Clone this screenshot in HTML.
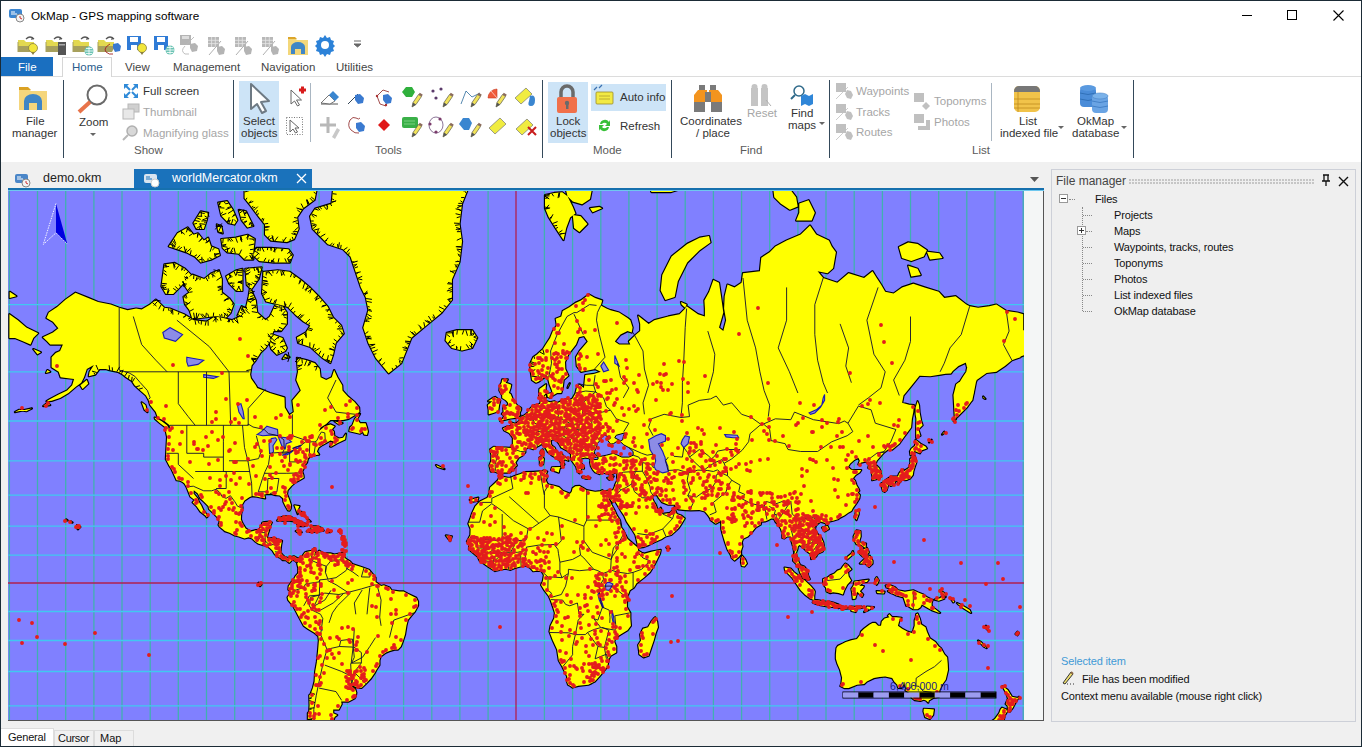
<!DOCTYPE html>
<html><head><meta charset="utf-8">
<style>
*{margin:0;padding:0;box-sizing:border-box}
html,body{width:1362px;height:747px;overflow:hidden;background:#f0f0f0;font-family:"Liberation Sans",sans-serif;font-size:11.5px;color:#222}
.a{position:absolute;white-space:nowrap}
#win{position:absolute;left:0;top:0;width:1362px;height:747px;background:#f0f0f0;overflow:hidden}
.t{position:absolute;white-space:nowrap;line-height:13px}
.g{color:#a6a6a6}
.lbl{color:#5a5a5a}
.sep{position:absolute;width:1px;background:#34495a}
.sepl{position:absolute;width:1px;background:#a9b6c2}
</style></head><body>
<div id="win">
<div class="a" style="left:0;top:0;width:1362px;height:162px;background:#fff"></div>
<div class="t" style="left:31px;top:9px;font-size:11.7px;color:#000">OkMap - GPS mapping software</div>
<div class="a" style="left:1242px;top:15px;width:10px;height:1px;background:#000"></div>
<div class="a" style="left:1287px;top:10px;width:10px;height:10px;border:1px solid #000"></div>
<svg class="a" style="left:1333px;top:10px" width="11" height="11"><path d="M0.5 0.5L10.5 10.5M10.5 0.5L0.5 10.5" stroke="#000" stroke-width="1.1"/></svg>
<svg class="a" style="left:0;top:0" width="370" height="57">
<g transform="translate(18,36)"><path d="M0 4h6l2 2h8v4H0z" fill="#e2d850"/><path d="M0 10h17l-3 6H0z" fill="#a7a05c"/><path d="M0 6v10" stroke="#a7a05c" stroke-width="1"/><path d="M8 3q4-4 8 0" stroke="#555" stroke-width="1.2" fill="none"/><path d="M14 1l2 2-3 1z" fill="#555"/></g><g transform="translate(28,43)"><circle cx="5" cy="5" r="4.5" fill="#f2e63a" stroke="#8a8040" stroke-width="0.8"/><path d="M3 9l2 3 2-3z" fill="#8a8040"/></g>
<g transform="translate(46,36)"><path d="M0 4h6l2 2h8v4H0z" fill="#e2d850"/><path d="M0 10h17l-3 6H0z" fill="#a7a05c"/><path d="M0 6v10" stroke="#a7a05c" stroke-width="1"/><path d="M8 3q4-4 8 0" stroke="#555" stroke-width="1.2" fill="none"/><path d="M14 1l2 2-3 1z" fill="#555"/></g><rect x="58" y="42" width="8" height="13" fill="#555"/><rect x="59" y="44" width="6" height="1.5" fill="#aaa"/>
<g transform="translate(73,36)"><path d="M0 4h6l2 2h8v4H0z" fill="#e2d850"/><path d="M0 10h17l-3 6H0z" fill="#a7a05c"/><path d="M0 6v10" stroke="#a7a05c" stroke-width="1"/><path d="M8 3q4-4 8 0" stroke="#555" stroke-width="1.2" fill="none"/><path d="M14 1l2 2-3 1z" fill="#555"/></g><g transform="translate(84,46)"><circle cx="5" cy="5" r="4.5" fill="#6cc4b4"/><path d="M0.5 5h9M5 0.5v9M2 2.5h6M2 7.5h6" stroke="#fff" stroke-width="0.8"/></g>
<g transform="translate(98,36)"><path d="M0 4h6l2 2h8v4H0z" fill="#e2d850"/><path d="M0 10h17l-3 6H0z" fill="#a7a05c"/><path d="M0 6v10" stroke="#a7a05c" stroke-width="1"/><path d="M8 3q4-4 8 0" stroke="#555" stroke-width="1.2" fill="none"/><path d="M14 1l2 2-3 1z" fill="#555"/></g><path d="M110 44q-7 4-4 8q3 3 7 2" stroke="#a02020" stroke-width="0.9" fill="none"/><path d="M113 44l5-1 3 3-1 5-5 1-2-4z" fill="#3a7ad0"/>
<rect x="127" y="36" width="14" height="14" fill="#2f7bd6"/><rect x="130" y="37" width="8" height="5" fill="#fff"/><rect x="131" y="45" width="6" height="5" fill="#fff"/><g transform="translate(137,43)"><circle cx="5" cy="5" r="4.5" fill="#f2e63a" stroke="#8a8040" stroke-width="0.8"/><path d="M3 9l2 3 2-3z" fill="#8a8040"/></g>
<rect x="154" y="36" width="14" height="14" fill="#2f7bd6"/><rect x="157" y="37" width="8" height="5" fill="#fff"/><rect x="158" y="45" width="6" height="5" fill="#fff"/><g transform="translate(165,45)"><circle cx="5" cy="5" r="4.5" fill="#6cc4b4"/><path d="M0.5 5h9M5 0.5v9M2 2.5h6M2 7.5h6" stroke="#fff" stroke-width="0.8"/></g>
<g transform="translate(180,35)"><rect x="0" y="0" width="11" height="10" fill="#b4b4b4"/><rect x="2" y="1" width="7" height="3" fill="#ddd"/></g><path d="M185 46q-5 5 0 8h4M186 45l8-8" stroke="#b8b8b8" stroke-width="0.9" fill="none"/><path d="M190 44l5-1 3 3-1 5-5 1-2-4z" fill="#b4b4b4"/>
<g transform="translate(208,37)"><rect x="0" y="0" width="11" height="10" fill="#b8b8b8"/><path d="M0 3.3h11M0 6.6h11M3.6 0v10M7.3 0v10" stroke="#e6e6e6" stroke-width="0.8"/><path d="M1 18L13 4" stroke="#b0b0b0" stroke-width="1"/><path d="M9 10l5-1 3 3-1 5-5 1-2-4z" fill="#b4b4b4"/></g>
<g transform="translate(235,37)"><rect x="0" y="0" width="11" height="10" fill="#b8b8b8"/><path d="M0 3.3h11M0 6.6h11M3.6 0v10M7.3 0v10" stroke="#e6e6e6" stroke-width="0.8"/><path d="M1 18L13 4" stroke="#b0b0b0" stroke-width="1"/><path d="M9 10l5-1 3 3-1 5-5 1-2-4z" fill="#b4b4b4"/></g>
<g transform="translate(262,37)"><rect x="0" y="0" width="11" height="10" fill="#b8b8b8"/><path d="M0 3.3h11M0 6.6h11M3.6 0v10M7.3 0v10" stroke="#e6e6e6" stroke-width="0.8"/><path d="M1 18L13 4" stroke="#b0b0b0" stroke-width="1"/><path d="M9 10l5-1 3 3-1 5-5 1-2-4z" fill="#b4b4b4"/></g>
<path d="M288 38h7l2 2h11v15h-20z" fill="#f3d77a"/><path d="M288 37h7l2 2h-9z" fill="#dca52a"/><path d="M291 54v-7a7 5 0 0 1 14 0v7h-4v-5h-6v5z" fill="#3f86c6"/>
<path d="M325 35l2 3 3-1 1 3 3 1-1 3 2 2-2 2 1 3-3 1-1 3-3-1-2 3-2-3-3 1-1-3-3-1 1-3-2-2 2-2-1-3 3-1 1-3 3 1z" fill="#2c82d8"/><circle cx="325" cy="45" r="4" fill="#fff"/>
<path d="M354 41h7M354 44h7l-3.5 3z" stroke="#666" stroke-width="1" fill="#666"/>
</svg>
<svg class="a" style="left:8px;top:7px" width="18" height="16" viewBox="0 0 18 16"><rect x="1" y="2" width="13" height="9" rx="2" fill="#3c86d0"/><path d="M3 5h4M3 7h6" stroke="#fff" stroke-width="1"/><circle cx="12" cy="11" r="4" fill="#f4f4f4" stroke="#888" stroke-width="1"/><path d="M12 9v2l2 1" stroke="#c33" stroke-width="1" fill="none"/></svg>

<div class="a" style="left:0;top:76px;width:1362px;height:1px;background:#dcdcdc"></div>
<div class="a" style="left:0;top:57px;width:53px;height:19px;background:#1a6fc0"></div>
<div class="t" style="left:18px;top:61px;color:#fff;font-size:11.5px">File</div>
<div class="a" style="left:62px;top:57px;width:50px;height:20px;background:#fff;border:1px solid #d6d6d6;border-bottom:none"></div>
<div class="t" style="left:72px;top:61px;color:#2a5c8c;font-size:11.5px">Home</div>
<div class="t" style="left:125px;top:61px;color:#444;font-size:11.5px">View</div>
<div class="t" style="left:173px;top:61px;color:#444;font-size:11.5px">Management</div>
<div class="t" style="left:261px;top:61px;color:#444;font-size:11.5px">Navigation</div>
<div class="t" style="left:336px;top:61px;color:#444;font-size:11.5px">Utilities</div>
<!-- separators -->
<div class="sep" style="left:63px;top:80px;height:78px"></div>
<div class="sep" style="left:233px;top:80px;height:78px"></div>
<div class="sep" style="left:542px;top:80px;height:78px"></div>
<div class="sep" style="left:671px;top:80px;height:78px"></div>
<div class="sep" style="left:829px;top:80px;height:78px"></div>
<div class="sep" style="left:1133px;top:80px;height:78px"></div>
<div class="sepl" style="left:310px;top:83px;height:59px"></div>
<div class="sepl" style="left:991px;top:83px;height:58px"></div>
<!-- highlight boxes -->
<div class="a" style="left:239px;top:81px;width:40px;height:62px;background:#cde4f7"></div>
<div class="a" style="left:548px;top:82px;width:40px;height:61px;background:#cde4f7"></div>
<div class="a" style="left:591px;top:84px;width:75px;height:27px;background:#cde4f7"></div>
<svg class="a" style="left:0;top:76px" width="1140" height="86">
<!-- File manager folder -->
<g transform="translate(0,-76)">
<path d="M19 88h9l3 3h16v19H19z" fill="#f5d67c"/><path d="M19 87h9l3 3H19z" fill="#dba224"/><path d="M24 110v-9a9 7 0 0 1 18 0v9h-5v-7h-8v7z" fill="#3f86c6"/>
<!-- Zoom magnifier -->
<circle cx="97" cy="95" r="9.5" fill="none" stroke="#6a6a6a" stroke-width="2"/><path d="M90 102L79 112" stroke="#e8734a" stroke-width="4"/>
<path d="M90 133h6l-3 3z" fill="#666"/>
<!-- Full screen -->
<path d="M124 84h5l-5 5zM138 84h-5l5 5zM124 98h5l-5-5zM138 98h-5l5-5z" fill="#2f8ad8"/><path d="M126 86l4 4M136 86l-4 4M126 96l4-4M136 96l-4-4" stroke="#2f8ad8" stroke-width="2"/>
<!-- Thumbnail gray -->
<rect x="128" y="104" width="11" height="8" fill="#d0d0d0" stroke="#b8b8b8"/><rect x="123" y="109" width="11" height="10" fill="#e8e8e8" stroke="#b8b8b8"/>
<!-- Magnifying glass gray -->
<circle cx="132" cy="131" r="5" fill="#d8d8d8" stroke="#b0b0b0" stroke-width="1.5"/><path d="M128 135l-5 5" stroke="#b8b8b8" stroke-width="2"/>
<!-- Select arrow -->
<path d="M251 84v25l6-5 5 9 4-2-5-9 8-1z" fill="#fff" stroke="#6e7a84" stroke-width="2" stroke-linejoin="round"/>
<path d="M291 90v14l3.5-3 3 5 2-1-3-5h5z" fill="#fff" stroke="#666" stroke-width="1"/><path d="M299 90h7M302.5 86.5v7" stroke="#d81c1c" stroke-width="3"/>
<rect x="286.5" y="117.5" width="16" height="17" fill="none" stroke="#777" stroke-dasharray="1 1.5"/><path d="M290 120v12l3-3 2.5 4 2-1-2.5-4h4z" fill="#fff" stroke="#666" stroke-width="1"/>
<!-- tools row1 -->
<path d="M321 104h17" stroke="#555" stroke-width="1"/><path d="M321 103l8-8 6 6-5 3z" fill="#fff" stroke="#555" stroke-width="0.8"/><path d="M329 95l4-4 6 6-4 4z" fill="#3a86d0"/>
<path d="M348 104l10-10" stroke="#345" stroke-width="1"/><path d="M355 95l5-1 4 4-1 5-5 1-3-4z" fill="#3a7ad0"/>
<path d="M377 96l6-6 6 2M377 96l3 8 6 2" stroke="#8a2020" stroke-width="0.8" fill="none"/><path d="M383 95l5-1 4 4-1 5-5 1-3-4z" fill="#3a7ad0"/><circle cx="377" cy="96" r="1.2" fill="#a33"/><circle cx="386" cy="105" r="1.2" fill="#a33"/>
<path d="M402 92l4-5h6l3 5-3 5h-6z" fill="#2fb03c"/><g transform="translate(412,94)"><path d="M0 13L1 8.5 6.5 0.5 9.5 2.5 4 10.5z" fill="#f2e35a" stroke="#5a5a4a" stroke-width="0.7"/><path d="M6.5 0.5L7.8-1.2 10.8 0.8 9.5 2.5z" fill="#8a6a5a"/><path d="M0 13l1-4.5 3 2z" fill="#555"/></g>
<circle cx="433" cy="91" r="1.6" fill="#5a3a6a"/><circle cx="441" cy="89" r="1.6" fill="#5a3a6a"/><circle cx="436" cy="98" r="1.6" fill="#5a3a6a"/><g transform="translate(443,94)"><path d="M0 13L1 8.5 6.5 0.5 9.5 2.5 4 10.5z" fill="#f2e35a" stroke="#5a5a4a" stroke-width="0.7"/><path d="M6.5 0.5L7.8-1.2 10.8 0.8 9.5 2.5z" fill="#8a6a5a"/><path d="M0 13l1-4.5 3 2z" fill="#555"/></g>
<path d="M461 104l5-13 6 6 8-4" stroke="#2a6a9a" stroke-width="0.8" fill="none"/><g transform="translate(471,94)"><path d="M0 13L1 8.5 6.5 0.5 9.5 2.5 4 10.5z" fill="#f2e35a" stroke="#5a5a4a" stroke-width="0.7"/><path d="M6.5 0.5L7.8-1.2 10.8 0.8 9.5 2.5z" fill="#8a6a5a"/><path d="M0 13l1-4.5 3 2z" fill="#555"/></g>
<path d="M497 98H488A9 9 0 0 1 497 89z" fill="#f05a3a" stroke="#c83a20" stroke-width="0.6"/><path d="M497 98L491 91" stroke="#fff" stroke-width="0.6"/><g transform="translate(496,94)"><path d="M0 13L1 8.5 6.5 0.5 9.5 2.5 4 10.5z" fill="#f2e35a" stroke="#5a5a4a" stroke-width="0.7"/><path d="M6.5 0.5L7.8-1.2 10.8 0.8 9.5 2.5z" fill="#8a6a5a"/><path d="M0 13l1-4.5 3 2z" fill="#555"/></g>
<path d="M515 98l11-10 6 6-11 10z" fill="#f0ec40" stroke="#777" stroke-width="0.7"/><path d="M530 96q5-2 5 4t-4 6q-4 0-2-5z" fill="#3a86d0"/>
<!-- tools row2 -->
<path d="M320 125h16M328 117v16" stroke="#b8b8b8" stroke-width="3"/><path d="M332 137l5-9 3 2-5 9z" fill="#c8c8c8"/>
<path d="M350 120q3-4 6-2t4 0M350 120q-3 6 1 10t8 3" stroke="#8a2020" stroke-width="0.8" fill="none"/><path d="M356 123l5-1 4 4-1 5-5 1-3-4z" fill="#3a7ad0"/>
<path d="M384 119l6 6-6 6-6-6z" fill="#e01818"/>
<rect x="402" y="117" width="16" height="11" rx="2" fill="#3ab048"/><path d="M404 121h11M404 124h11" stroke="#8ad890" stroke-width="0.8"/><g transform="translate(412,124)"><path d="M0 13L1 8.5 6.5 0.5 9.5 2.5 4 10.5z" fill="#f2e35a" stroke="#5a5a4a" stroke-width="0.7"/><path d="M6.5 0.5L7.8-1.2 10.8 0.8 9.5 2.5z" fill="#8a6a5a"/><path d="M0 13l1-4.5 3 2z" fill="#555"/></g>
<ellipse cx="436" cy="125" rx="7" ry="8" fill="none" stroke="#5a3a6a" stroke-width="0.7"/><circle cx="430" cy="124" r="1.6" fill="#7a3a6a"/><circle cx="440" cy="119" r="1.6" fill="#7a3a6a"/><circle cx="436" cy="132" r="1.6" fill="#7a3a6a"/><g transform="translate(443,124)"><path d="M0 13L1 8.5 6.5 0.5 9.5 2.5 4 10.5z" fill="#f2e35a" stroke="#5a5a4a" stroke-width="0.7"/><path d="M6.5 0.5L7.8-1.2 10.8 0.8 9.5 2.5z" fill="#8a6a5a"/><path d="M0 13l1-4.5 3 2z" fill="#555"/></g>
<path d="M459 124l4-6h6l3 5-3 7h-5z" fill="#3a86d0"/><g transform="translate(471,124)"><path d="M0 13L1 8.5 6.5 0.5 9.5 2.5 4 10.5z" fill="#f2e35a" stroke="#5a5a4a" stroke-width="0.7"/><path d="M6.5 0.5L7.8-1.2 10.8 0.8 9.5 2.5z" fill="#8a6a5a"/><path d="M0 13l1-4.5 3 2z" fill="#555"/></g>
<path d="M489 128l11-10 6 6-11 10z" fill="#f0ec40" stroke="#777" stroke-width="0.7"/>
<path d="M516 129l11-10 6 6-11 10z" fill="#f0ec40" stroke="#777" stroke-width="0.7"/><path d="M528 127l8 8M536 127l-8 8" stroke="#c81c1c" stroke-width="2"/>
<!-- Lock -->
<path d="M561 98v-6a6 6 0 0 1 12 0v6" fill="none" stroke="#6a6a6a" stroke-width="3.5"/><rect x="557" y="97" width="20" height="16" rx="2" fill="#f0704a"/><circle cx="567" cy="103" r="2.2" fill="#6a6a6a"/><rect x="566" y="103" width="2.5" height="6" fill="#6a6a6a"/>
<!-- Auto info -->
<rect x="596" y="92" width="17" height="12" rx="1" fill="#f2ea44" stroke="#9a8a2a" stroke-width="0.8"/><path d="M599 96h11M599 99h11" stroke="#b0a030" stroke-width="0.8"/><path d="M594 90l3-3M599 88l3-3" stroke="#3a70b0" stroke-width="1.2"/>
<!-- Refresh -->
<path d="M600 124a5 5 0 0 1 9-2l1-2v6h-5l2-2a3 3 0 0 0-5 0z" fill="#38c038"/><path d="M609 127a5 5 0 0 1-9 2l-1 2v-6h5l-2 2a3 3 0 0 0 5 0z" fill="#38c038"/>
<!-- Binoculars -->
<rect x="699" y="85" width="6" height="5" fill="#7a7a7a"/><rect x="710" y="85" width="6" height="5" fill="#7a7a7a"/><path d="M694 95l4-5h9v12h-13z" fill="#f3941e"/><path d="M722 95l-4-5h-9v12h13z" fill="#f3941e"/><rect x="705" y="92" width="6" height="10" fill="#7a7a7a"/><rect x="694" y="102" width="11" height="10" fill="#7a7a7a"/><rect x="711" y="102" width="11" height="10" fill="#7a7a7a"/>
<!-- Reset gray -->
<path d="M751 88h7v18h-7zM761 88h7v18h-7z" fill="#c4c4c4"/><circle cx="754.5" cy="87" r="3" fill="#c4c4c4"/><circle cx="764.5" cy="87" r="3" fill="#c4c4c4"/><path d="M766 100l5 6" stroke="#b0b0b0" stroke-width="1"/>
<!-- Find maps -->
<circle cx="799" cy="91" r="5" fill="#fff" stroke="#2f6a8a" stroke-width="1.5"/><path d="M795 95l-4 4" stroke="#2f6a8a" stroke-width="2"/><path d="M801 96l4-2 4 2 4-2v10l-4 2-4-2-4 2z" fill="#2f86d8"/>
<path d="M819 122h6l-3 3z" fill="#666"/>
<!-- List small gray icons -->
<g fill="#c0c0c0">
<rect x="836" y="83" width="10" height="9"/><path d="M847 90l4 1 2 4-2 4-4-1-2-4z"/><path d="M836 99l12-12" stroke="#c0c0c0" stroke-width="0.8"/>
<rect x="836" y="104" width="10" height="9"/><path d="M847 111l4 1 2 4-2 4-4-1-2-4z"/><path d="M836 120l12-12" stroke="#c0c0c0" stroke-width="0.8"/>
<rect x="836" y="124" width="10" height="9"/><path d="M847 131l4 1 2 4-2 4-4-1-2-4z"/><path d="M836 140l12-12" stroke="#c0c0c0" stroke-width="0.8"/>
<rect x="914" y="93" width="10" height="9"/><path d="M926 102l4 4-4 4-4-4z"/>
<rect x="914" y="114" width="10" height="9"/><path d="M918 130h12v-10h-4v6h-8z"/>
</g>
<!-- List indexed file -->
<rect x="1014" y="86" width="26" height="26" rx="5" fill="#f1c34a"/><path d="M1019 86h16a5 5 0 0 1 5 5v1h-26v-1a5 5 0 0 1 5-5z" fill="#777"/><path d="M1014 99h26M1014 104h26M1014 108h26M1018 92v20" stroke="#c08a20" stroke-width="0.8"/>
<path d="M1058 126h6l-3 3z" fill="#666"/>
<!-- OkMap database -->
<rect x="1080" y="87" width="16" height="20" rx="4" fill="#4a8cd8"/><ellipse cx="1088" cy="88" rx="8" ry="3" fill="#5a9ae0"/><path d="M1080 93q8 3 16 0M1080 99q8 3 16 0" stroke="#2a6ab0" stroke-width="0.8" fill="none"/>
<rect x="1092" y="95" width="16" height="18" rx="4" fill="#6aa4e4"/><ellipse cx="1100" cy="96" rx="8" ry="3" fill="#7ab2ea" stroke="#4a84c8" stroke-width="0.6"/><path d="M1092 101q8 3 16 0M1092 106q8 3 16 0" stroke="#3a78c0" stroke-width="0.8" fill="none"/>
<path d="M1121 126h6l-3 3z" fill="#666"/>
</g>
</svg>
<!-- labels -->
<div class="t" style="left:26px;top:115px;color:#333">File</div>
<div class="t" style="left:12px;top:127px;color:#333">manager</div>
<div class="t" style="left:79px;top:116px;color:#333">Zoom</div>
<div class="t" style="left:143px;top:85px;color:#333">Full screen</div>
<div class="t g" style="left:143px;top:106px">Thumbnail</div>
<div class="t g" style="left:143px;top:127px">Magnifying glass</div>
<div class="t lbl" style="left:134px;top:144px">Show</div>
<div class="t" style="left:243px;top:115px;color:#333">Select</div>
<div class="t" style="left:241px;top:127px;color:#333">objects</div>
<div class="t lbl" style="left:375px;top:144px">Tools</div>
<div class="t" style="left:556px;top:115px;color:#333">Lock</div>
<div class="t" style="left:550px;top:127px;color:#333">objects</div>
<div class="t" style="left:620px;top:91px;color:#333">Auto info</div>
<div class="t" style="left:620px;top:120px;color:#333">Refresh</div>
<div class="t lbl" style="left:593px;top:144px">Mode</div>
<div class="t" style="left:680px;top:115px;color:#333">Coordinates</div>
<div class="t" style="left:696px;top:127px;color:#333">/ place</div>
<div class="t g" style="left:747px;top:107px">Reset</div>
<div class="t" style="left:791px;top:107px;color:#333">Find</div>
<div class="t" style="left:788px;top:119px;color:#333">maps</div>
<div class="t lbl" style="left:740px;top:144px">Find</div>
<div class="t g" style="left:856px;top:85px">Waypoints</div>
<div class="t g" style="left:856px;top:106px">Tracks</div>
<div class="t g" style="left:856px;top:126px">Routes</div>
<div class="t g" style="left:934px;top:95px">Toponyms</div>
<div class="t g" style="left:934px;top:116px">Photos</div>
<div class="t lbl" style="left:972px;top:144px">List</div>
<div class="t" style="left:1019px;top:115px;color:#333">List</div>
<div class="t" style="left:1000px;top:127px;color:#333">indexed file</div>
<div class="t" style="left:1077px;top:115px;color:#333">OkMap</div>
<div class="t" style="left:1072px;top:127px;color:#333">database</div>

<!-- doc tabs -->
<svg class="a" style="left:14px;top:172px" width="18" height="16" viewBox="0 0 18 16"><rect x="1" y="2" width="13" height="9" rx="2" fill="#4a86c8"/><path d="M3 5h4M3 7h6" stroke="#fff" stroke-width="1"/><circle cx="12" cy="11" r="4" fill="#f4f4f4" stroke="#888" stroke-width="1"/><path d="M12 9v2l2 1" stroke="#c33" stroke-width="1" fill="none"/></svg>
<div class="t" style="left:43px;top:172px;font-size:12.5px;color:#222">demo.okm</div>
<div class="a" style="left:134px;top:169px;width:178px;height:20px;background:#1a72bb"></div>
<svg class="a" style="left:143px;top:172px" width="18" height="16" viewBox="0 0 18 16"><rect x="1" y="2" width="13" height="9" rx="2" fill="#d8e4f0"/><path d="M3 5h4M3 7h6" stroke="#1a72bb" stroke-width="1"/><circle cx="12" cy="11" r="4" fill="#fff" stroke="#ccc" stroke-width="1"/></svg>
<div class="t" style="left:172px;top:172px;font-size:12.5px;color:#fff">worldMercator.okm</div>
<svg class="a" style="left:296px;top:173px" width="11" height="11"><path d="M1 1L10 10M10 1L1 10" stroke="#fff" stroke-width="1.3"/></svg>
<svg class="a" style="left:1030px;top:177px" width="10" height="6"><path d="M0 0h9L4.5 5z" fill="#555"/></svg>
<div class="a" style="left:8px;top:188px;width:1036px;height:2px;background:#1670ae"></div>
<div class="a" style="left:8px;top:190px;width:1036px;height:1px;background:#6fc8ef"></div>
<div class="a" style="left:8px;top:191px;width:1036px;height:530px;background:#f4f6f6;border-right:1px solid #555;border-bottom:1px solid #555"></div>
<!-- bottom tabs -->
<div class="a" style="left:1px;top:728px;width:53px;height:18px;background:#fff;border-top:1px solid #ddd;border-right:1px solid #ddd"></div>
<div class="t" style="left:8px;top:731px;color:#111;font-size:11px;letter-spacing:-0.2px">General</div>
<div class="a" style="left:54px;top:730px;width:40px;height:16px;border:1px solid #dcdcdc;border-bottom:none"></div>
<div class="t" style="left:58px;top:732px;color:#111;font-size:11px;letter-spacing:-0.3px">Cursor</div>
<div class="a" style="left:94px;top:730px;width:40px;height:16px;border:1px solid #dcdcdc;border-bottom:none"></div>
<div class="t" style="left:100px;top:732px;color:#111;font-size:11px">Map</div>

<svg class="a" style="left:8px;top:191px" width="1016" height="529" viewBox="8 191 1016 529">
<rect x="8" y="191" width="1016" height="529" fill="#8080ff"/>
<path d="M9.4 191V720M37.5 191V720M65.7 191V720M93.9 191V720M122.0 191V720M150.2 191V720M178.3 191V720M206.5 191V720M234.7 191V720M262.8 191V720M291.0 191V720M319.1 191V720M347.3 191V720M375.5 191V720M403.6 191V720M431.8 191V720M459.9 191V720M488.1 191V720M544.4 191V720M572.6 191V720M600.8 191V720M628.9 191V720M657.1 191V720M685.2 191V720M713.4 191V720M741.6 191V720M769.7 191V720M797.9 191V720M826.0 191V720M854.2 191V720M882.4 191V720M910.5 191V720M938.7 191V720M966.8 191V720M995.0 191V720M1023.2 191V720" stroke="#40b0b0" stroke-width="1.3" fill="none"/>
<path d="M8 705.8H1024M8 671.5H1024M8 640.5H1024M8 611.5H1024M8 555.1H1024M8 526.1H1024M8 495.1H1024M8 460.8H1024M8 421.0H1024M8 371.8H1024M8 304.6H1024" stroke="#40c8f0" stroke-width="1.3" fill="none"/>
<path d="M516 191V720M8 583H1024" stroke="#b02050" stroke-width="1.3" fill="none"/>
<path d="M42.9 337.3 53.0 332.5 58.4 328.3 53.0 321.7 46.5 318.0 48.8 312.6 57.2 307.0 65.7 299.6 75.5 292.7 88.2 297.9 98.1 302.1 110.7 304.6 119.2 307.8 127.6 310.2 136.1 308.6 141.7 309.4 150.2 304.6 155.8 299.6 164.3 307.8 169.9 308.6 184.0 314.2 193.8 320.2 206.5 321.7 214.9 316.5 223.4 318.0 231.8 320.2 240.3 316.5 245.9 308.6 248.7 296.2 250.1 287.4 255.8 300.4 257.2 312.6 265.6 320.2 269.9 316.5 275.5 304.6 282.5 306.2 286.8 312.6 286.8 323.9 281.1 331.1 273.5 331.1 269.9 341.4 265.6 347.9 260.8 352.3 255.8 360.2 251.6 365.5 250.1 374.6 251.0 378.4 255.8 385.3 257.2 387.9 269.9 393.0 284.5 397.4 284.8 407.5 289.3 415.2 293.8 412.1 292.4 400.4 300.8 390.5 296.3 380.0 298.0 371.8 297.2 363.2 296.9 357.8 306.5 360.2 314.9 363.2 319.7 369.0 320.6 377.3 326.2 380.0 331.8 377.3 334.1 370.1 337.4 377.3 342.2 385.3 342.5 390.5 347.9 396.5 354.3 401.8 359.1 407.5 359.4 412.1 356.3 414.3 348.7 418.8 343.1 420.1 330.4 420.1 326.2 424.0 320.6 427.4 318.6 431.6 315.8 434.5 319.7 430.4 324.8 426.2 330.4 424.4 334.6 426.2 331.8 429.5 333.8 431.6 334.3 436.1 338.9 438.6 343.1 437.8 345.9 433.7 345.1 439.4 337.2 443.3 331.5 446.5 330.1 446.5 334.6 441.8 330.4 440.6 327.0 442.5 322.5 444.9 318.6 447.6 316.9 451.5 319.1 454.5 314.9 455.2 309.3 457.1 307.9 458.6 307.0 462.6 305.1 464.8 304.8 466.2 302.2 471.5 303.4 475.0 303.7 477.8 299.4 480.2 295.2 482.5 291.3 485.9 287.6 490.2 287.0 494.1 289.3 499.9 291.0 505.3 290.7 508.4 289.6 510.6 287.9 510.3 285.6 506.2 283.4 501.8 283.1 498.3 279.7 495.4 275.5 495.1 271.3 493.8 267.0 494.1 264.2 494.4 265.1 498.3 261.4 497.7 257.2 496.7 252.1 496.1 249.3 497.3 244.5 500.5 242.0 504.7 242.5 508.1 241.1 514.0 240.9 519.5 242.3 523.1 245.6 528.4 248.7 530.5 250.4 531.7 255.8 530.2 258.6 529.9 261.4 526.7 262.3 522.8 264.2 522.2 269.9 521.6 271.8 522.5 269.9 526.1 269.0 530.5 267.9 533.5 266.8 537.9 269.9 538.4 274.1 538.1 282.0 540.8 281.1 545.1 280.6 549.4 280.8 552.8 282.5 555.1 284.8 557.1 288.2 558.0 291.3 557.1 293.8 556.3 296.9 558.0 298.3 558.8 298.6 560.8 296.6 562.2 295.2 560.8 292.4 559.4 290.1 561.9 289.3 562.8 285.9 560.2 282.5 560.0 280.6 558.0 276.9 556.3 274.6 554.0 272.7 550.8 269.9 548.0 267.0 545.7 263.4 545.1 258.6 543.7 255.8 541.9 252.1 538.4 248.7 537.3 244.5 538.4 238.9 536.4 234.9 535.5 230.2 532.9 224.8 531.1 222.5 529.0 219.7 526.7 218.6 524.9 219.7 521.6 218.3 518.5 216.6 516.4 212.7 512.4 209.0 509.0 208.5 506.2 204.0 501.8 200.3 498.3 197.8 493.5 193.8 490.2 193.5 493.5 198.0 498.9 198.6 501.5 201.1 505.3 203.4 510.3 205.7 513.4 207.9 516.1 206.8 517.3 205.4 515.5 200.3 511.5 196.6 506.2 192.7 502.4 194.7 499.9 190.4 496.7 188.5 491.8 186.5 486.9 184.5 483.5 182.6 481.9 179.7 480.5 176.6 480.2 174.7 476.0 173.0 472.2 171.3 468.7 169.6 466.2 165.9 459.3 166.2 453.3 166.5 447.6 167.1 436.9 165.9 431.6 165.1 427.8 169.9 428.7 169.6 425.3 164.3 421.0 157.8 417.5 155.8 412.1 150.2 405.1 148.8 400.4 146.0 395.5 140.3 390.5 134.7 385.3 131.9 381.1 126.2 377.3 122.9 374.6 117.8 371.8 109.3 370.1 105.7 369.0 99.5 369.0 95.3 374.6 88.8 376.2 89.6 371.8 93.9 364.9 86.8 369.0 84.0 377.3 81.2 382.7 75.5 386.9 68.5 393.0 60.1 397.9 51.6 400.8 46.5 401.3 50.2 398.9 58.7 394.5 67.1 390.5 72.2 385.3 74.1 378.9 69.9 378.4 60.6 377.3 58.7 371.8 51.6 367.3 51.6 357.2 55.8 352.9 60.1 351.0 62.9 344.6 57.2 344.6 50.2 344.6 47.4 341.4 42.9 337.3ZM298.3 558.8 302.2 556.5 305.1 552.3 307.3 551.7 312.1 550.8 314.4 548.3 315.5 550.8 314.6 553.4 314.4 556.5 316.3 553.7 319.1 550.8 323.9 553.4 330.4 553.4 334.6 554.6 341.7 553.1 343.1 555.7 345.9 559.1 350.1 561.4 352.4 564.2 361.4 567.0 369.0 569.8 372.1 573.5 375.5 577.7 375.5 581.9 378.3 584.1 381.1 586.1 383.9 585.3 389.5 587.5 391.5 590.3 399.4 591.4 403.6 591.4 407.8 593.7 416.3 597.9 418.0 601.6 418.0 605.8 414.9 611.5 411.2 615.8 407.8 620.1 406.4 625.8 405.0 634.6 403.1 640.5 400.8 646.5 398.0 649.6 394.6 649.6 389.5 651.1 385.9 652.6 380.5 656.6 379.4 660.4 379.4 665.1 376.3 669.9 374.6 673.1 371.2 678.1 365.9 683.7 361.7 687.8 357.7 687.5 352.9 685.8 351.5 686.4 355.2 689.2 356.3 692.6 355.8 696.1 354.3 698.6 348.7 701.5 341.1 701.5 341.7 704.0 338.9 709.5 333.2 709.5 333.2 713.3 337.2 715.1 334.6 717.1 332.4 722.9 326.7 724.8 326.2 730.9 330.7 737.1 322.0 747.8 323.6 755.9 327.6 768.7 319.1 768.7 306.5 754.5 303.7 741.3 303.7 728.8 307.9 720.9 307.9 713.3 309.3 711.4 309.6 705.1 309.3 695.1 310.4 694.4 312.9 688.1 314.6 681.4 315.2 671.5 316.9 661.9 318.0 651.4 318.9 640.5 318.3 636.1 314.9 633.1 307.9 628.7 303.7 625.8 301.4 621.5 299.1 617.2 296.1 611.5 293.0 605.8 288.2 600.1 287.6 597.3 289.6 594.5 291.0 591.7 288.4 589.5 288.7 586.1 290.7 583.3 292.4 580.5 294.1 579.1 295.5 576.3 298.0 573.5 298.3 572.1 298.3 567.9 297.2 563.6 298.6 560.8ZM500.5 475.0 498.5 473.3 495.1 471.5 490.9 471.5 489.5 465.5 491.2 460.8 491.5 455.2 490.1 449.5 493.7 446.8 500.8 447.6 505.6 447.6 511.2 448.0 512.9 443.7 512.9 437.8 509.2 432.9 504.2 430.4 503.0 428.3 507.8 426.2 511.8 426.6 510.9 422.3 515.7 424.0 516.6 423.2 520.5 420.1 521.6 416.6 524.7 415.2 527.5 413.0 529.2 409.8 533.2 405.6 537.4 405.1 540.2 403.7 540.8 400.4 539.1 395.5 539.4 388.9 546.1 384.3 545.6 387.9 546.1 393.0 543.9 395.5 544.1 398.9 545.0 400.8 550.1 402.3 554.3 401.3 557.1 403.2 562.7 400.4 567.5 398.9 568.6 400.8 572.6 398.4 575.4 393.5 576.8 387.9 579.6 384.8 583.9 387.9 584.7 381.1 585.3 375.1 593.7 374.0 600.8 371.8 595.1 369.0 586.7 370.7 581.0 371.8 576.8 366.1 576.0 357.2 579.6 351.0 587.8 341.4 584.1 336.0 578.8 337.3 576.0 344.6 568.4 354.2 565.0 362.0 565.3 369.0 568.4 375.7 563.6 380.0 562.7 387.9 561.3 393.0 557.1 393.0 552.9 395.5 552.0 390.5 549.5 384.3 547.8 377.3 545.8 374.6 544.4 377.3 538.8 381.6 536.0 382.7 532.0 380.0 531.2 374.6 530.4 369.5 530.4 363.2 533.2 357.2 537.4 354.2 543.0 349.1 545.8 344.6 550.1 338.0 552.9 331.1 556.8 325.4 555.7 318.7 561.3 316.5 562.7 311.0 569.8 307.0 575.4 302.9 581.0 300.4 588.9 294.5 595.1 297.9 602.2 300.4 600.8 305.4 606.4 308.6 610.6 310.2 619.1 312.6 627.5 318.0 630.3 320.2 632.6 327.6 631.7 332.5 627.5 331.1 620.5 334.6 614.8 341.4 619.1 344.6 624.7 344.6 630.3 344.6 628.9 341.4 636.0 334.6 640.2 331.1 640.2 323.9 638.2 315.7 645.8 321.7 648.6 323.9 654.3 320.2 668.3 316.5 679.6 314.2 685.2 308.6 686.6 306.2 697.9 314.2 704.9 316.5 704.9 308.6 704.4 300.4 709.2 291.8 713.4 279.9 719.0 282.8 721.0 296.2 723.3 312.6 719.0 327.6 723.3 331.1 726.1 320.2 724.1 308.6 724.7 296.2 727.5 284.6 734.5 287.4 741.6 282.8 743.0 273.2 759.9 271.2 761.3 257.7 769.7 252.2 775.4 246.5 786.6 240.6 800.7 234.5 810.0 225.5 816.2 234.5 828.9 240.6 831.7 246.5 835.9 252.2 833.1 268.2 827.5 273.2 817.6 271.2 823.2 278.0 837.3 282.8 848.6 273.2 864.1 278.0 872.5 271.2 876.7 278.0 881.0 284.6 885.2 291.8 893.6 293.6 902.1 287.4 913.3 283.7 924.6 287.4 938.7 291.8 944.3 297.9 955.6 296.2 966.3 304.6 969.7 306.2 978.1 307.8 989.4 306.2 996.4 304.6 1006.3 311.0 1017.5 312.6 1023.2 314.2 1023.2 338.0 1018.9 341.4 1016.1 344.6 1021.8 354.2 1020.4 357.2 1011.9 360.2 1004.9 366.1 996.4 371.8 986.6 372.9 976.7 380.0 974.7 385.3 973.9 393.0 971.9 400.4 966.8 407.5 957.6 416.6 956.4 409.8 954.7 397.9 957.8 385.3 962.6 377.3 966.3 371.8 968.3 361.4 958.4 366.1 950.5 372.9 940.9 374.6 930.2 376.2 919.5 375.7 911.9 385.3 903.5 395.5 902.1 402.8 909.1 404.7 913.9 405.1 913.3 412.1 911.9 418.8 911.1 427.4 904.9 435.7 899.3 443.7 892.2 449.5 888.0 449.5 884.3 452.2 881.5 455.2 876.7 460.8 875.3 464.4 879.0 468.0 880.7 471.5 880.7 476.7 879.5 478.1 875.3 479.5 872.2 480.2 872.5 476.7 871.9 473.3 872.5 469.8 868.3 468.0 869.1 464.4 866.3 461.5 861.2 462.6 858.4 464.4 859.8 460.8 858.4 457.8 854.2 460.0 850.0 463.7 848.0 466.9 851.1 469.8 855.6 470.1 861.2 470.1 859.8 472.2 855.6 475.0 852.8 478.5 855.0 480.8 856.5 485.2 858.4 488.5 859.3 490.8 857.6 492.5 859.8 495.1 859.3 498.3 856.5 503.1 853.1 507.8 851.4 510.9 848.6 512.4 844.3 515.5 840.1 517.6 837.9 519.2 833.1 520.7 828.9 521.6 826.9 525.5 825.5 523.1 820.4 521.6 816.7 524.6 814.2 527.6 816.2 532.0 818.2 534.9 821.3 537.9 823.2 542.2 824.1 548.0 822.7 551.4 817.6 553.7 816.2 556.5 811.1 559.1 811.4 556.5 810.6 553.7 806.3 550.8 803.5 548.0 800.4 545.4 799.3 545.1 797.9 546.5 797.3 549.4 795.6 553.7 797.3 558.0 798.7 562.2 800.1 565.0 804.1 566.5 807.5 570.7 807.7 574.9 809.7 579.1 808.0 579.7 802.1 576.3 800.1 572.6 798.7 567.9 797.3 565.0 793.1 560.8 793.7 556.5 794.2 552.3 793.1 546.5 791.4 540.8 790.8 536.4 787.2 536.4 784.4 538.4 782.4 537.9 782.4 533.5 781.0 529.0 778.2 524.6 775.4 521.6 773.9 518.5 771.1 518.5 768.3 520.1 765.5 521.3 761.3 521.6 760.7 524.6 755.6 527.6 752.8 531.1 747.8 536.4 743.0 538.7 741.8 542.2 742.4 546.5 741.0 550.8 741.0 554.3 738.7 557.1 734.5 560.5 731.7 558.0 730.9 555.1 727.5 549.4 725.5 543.7 724.1 539.3 722.4 533.5 721.3 529.0 721.3 524.6 720.7 520.1 719.6 521.6 715.7 523.7 714.8 523.1 710.6 520.1 710.3 518.5 708.3 515.5 704.9 511.5 699.3 510.0 690.9 510.3 685.2 510.0 678.2 509.3 674.8 504.7 668.3 504.7 661.9 502.1 659.0 498.3 657.1 495.1 652.9 495.1 651.4 496.7 653.7 501.5 655.7 504.7 657.1 508.4 659.3 510.9 660.7 507.8 661.3 509.3 661.3 512.4 662.7 514.0 669.7 513.0 673.1 510.0 674.8 506.8 675.4 510.9 676.8 514.0 681.0 515.5 684.7 518.5 681.0 524.6 679.0 527.6 676.2 530.5 671.2 534.9 665.5 536.4 661.3 539.3 654.3 542.2 648.6 545.1 643.0 547.1 638.5 547.7 637.9 545.1 636.8 540.8 635.4 534.9 631.7 529.0 626.7 521.6 624.1 515.5 621.0 510.9 618.2 506.2 615.4 501.5 614.8 496.7 613.7 499.9 612.6 502.4 609.8 498.3 607.8 495.1 607.2 490.8 613.1 490.2 614.6 486.9 615.4 484.2 617.4 480.2 617.1 476.7 617.6 473.3 614.8 472.6 612.0 474.3 609.2 474.3 606.4 473.3 602.2 472.2 599.3 474.0 595.1 472.2 592.9 469.8 590.9 466.2 590.1 462.6 590.3 460.8 591.7 458.6 596.5 457.1 598.2 456.3 595.7 455.2 594.6 453.3 594.3 451.5 596.5 447.6 597.1 443.7 599.9 440.6 602.2 436.5 605.0 435.3 610.6 437.8 607.8 440.6 610.6 444.1 613.4 443.7 616.2 441.8 619.3 440.2 620.5 441.8 623.8 444.9 628.9 447.6 633.1 451.5 633.1 455.2 628.9 457.1 621.9 457.1 616.2 454.5 613.4 453.3 606.4 455.2 600.8 456.3 598.5 456.7 597.9 457.8 593.7 458.9 590.9 460.0 589.5 458.2 585.3 457.5 581.0 458.6 580.5 462.6 583.9 466.2 583.9 468.7 581.0 468.0 580.5 471.5 579.6 473.3 577.4 471.5 576.3 466.9 574.6 464.4 572.0 460.8 570.9 458.9 571.2 454.1 567.8 451.1 561.3 447.6 559.1 443.7 556.5 440.6 555.1 439.4 553.2 439.0 550.9 440.2 550.9 443.7 551.8 445.7 554.6 447.6 556.3 451.5 557.9 453.3 561.9 453.7 563.0 456.3 567.0 458.6 568.4 460.8 564.7 459.3 563.0 461.5 564.4 464.4 562.7 466.2 560.5 468.0 561.6 465.1 560.2 460.8 556.3 457.8 552.9 456.0 550.9 454.5 547.8 451.8 545.3 447.6 543.9 445.3 541.3 444.1 538.8 445.7 536.8 446.8 533.2 449.2 531.2 448.4 527.5 447.6 525.3 449.5 525.3 452.2 522.5 455.6 518.5 457.8 515.4 462.6 516.8 465.5 514.9 466.9 513.5 469.4 509.5 472.6 503.9 472.6 501.6 474.0 500.5 475.0ZM9.4 314.2 17.8 320.2 26.3 327.6 38.1 333.2 33.3 338.0 30.5 344.6 23.5 341.4 15.0 338.0 9.4 338.0ZM9.7 291.8 16.4 296.2 9.7 297.9ZM499.9 475.7 502.2 476.7 507.8 477.8 510.6 477.8 514.6 476.0 520.5 474.0 524.7 472.2 533.2 471.9 540.2 471.5 543.9 470.5 547.2 471.5 546.1 473.6 547.2 476.7 545.8 480.2 547.2 483.5 548.7 484.5 553.4 485.6 559.1 487.2 562.7 490.8 567.0 492.5 569.8 494.1 571.7 491.8 572.6 488.2 575.4 486.2 579.6 485.9 583.9 488.5 586.7 490.2 595.1 491.8 600.5 491.2 602.2 490.2 603.6 491.2 607.2 490.8 607.8 495.1 609.2 499.9 611.5 504.7 614.8 510.9 616.8 515.5 619.9 520.1 620.5 523.1 621.3 527.6 623.3 530.5 625.5 534.9 627.5 539.0 633.1 543.7 638.2 548.0 637.9 550.6 641.6 552.8 644.4 553.7 651.4 551.7 655.7 550.8 660.7 550.0 659.9 553.7 657.1 559.4 654.3 565.0 650.0 572.1 643.8 577.7 636.5 583.3 634.0 587.5 629.8 590.3 628.1 594.5 626.7 597.3 626.9 602.4 626.9 607.2 630.3 612.9 630.3 618.6 630.9 625.8 627.5 630.2 620.5 634.6 618.2 636.1 614.6 639.9 614.3 642.0 616.2 646.5 616.2 652.6 610.6 655.7 608.9 658.8 607.2 666.7 603.6 671.2 599.3 676.4 594.8 681.4 591.7 683.1 588.4 684.7 578.2 685.8 572.6 687.5 570.6 686.1 568.1 684.7 567.0 681.4 567.2 676.4 562.5 667.0 558.8 660.4 557.1 649.6 552.9 640.5 549.5 631.7 550.6 625.8 554.3 618.3 554.9 612.9 553.4 608.1 550.6 600.1 548.7 595.9 544.4 590.3 541.1 585.0 542.5 581.9 543.0 580.5 543.9 574.9 541.6 571.2 537.4 570.7 533.2 571.2 530.4 567.9 525.8 565.3 520.5 566.5 514.9 567.9 510.6 569.8 505.0 568.7 495.1 571.0 488.1 566.5 483.9 563.6 479.7 560.8 477.7 556.5 472.6 552.3 469.0 549.4 469.2 545.1 467.0 541.6 470.4 534.9 470.6 529.0 468.4 523.7 470.4 518.5 471.8 514.0 475.4 506.2 479.9 501.5 487.5 497.7 489.2 493.8 490.1 487.5 494.9 483.2 498.0 480.2 499.9 475.7ZM655.1 617.2 657.1 621.5 657.9 627.3 655.7 633.1 653.7 640.5 650.6 649.6 648.6 655.7 643.6 657.3 639.3 654.2 639.1 651.1 638.2 645.0 641.0 640.5 640.2 634.6 643.0 628.7 648.1 627.3 651.4 621.5 653.7 618.6ZM681.0 302.1 686.6 304.6 685.2 307.8 681.6 304.6ZM651.4 192.0 645.8 175.0 679.6 165.8 696.5 183.8 671.2 192.0ZM917.6 401.3 919.0 405.1 919.5 412.1 921.2 421.0 922.6 425.3 918.4 429.5 920.4 435.7 916.2 437.8 916.2 431.6 916.2 427.4 916.4 418.8 915.6 414.3 915.6 407.5ZM915.6 439.8 920.4 443.7 925.5 446.5 926.9 448.4 921.8 450.3 919.8 453.3 914.7 451.1 910.5 455.2 910.0 451.5 911.4 448.8 915.0 445.7ZM914.5 456.0 915.6 458.9 916.2 462.6 914.7 466.9 913.3 471.5 912.8 475.0 910.0 478.5 907.1 479.8 904.9 480.2 902.1 479.5 898.7 483.5 897.0 480.2 892.2 480.8 886.6 481.9 885.2 480.5 890.8 476.7 897.9 476.4 899.3 473.3 901.5 470.5 903.5 469.8 903.5 471.5 908.8 468.0 910.5 462.6 910.2 458.9ZM884.9 481.9 888.0 485.2 886.6 490.2 884.6 491.8 882.9 490.8 881.8 486.9 881.0 483.5ZM890.8 480.8 895.3 481.2 894.2 484.2 890.8 485.9 888.8 483.5ZM858.4 510.0 858.7 514.0 856.5 520.1 854.5 517.0 855.9 512.4ZM827.5 526.1 828.9 529.0 824.6 531.4 822.1 527.6ZM856.5 530.5 860.4 531.1 860.7 536.4 859.0 542.2 866.0 543.7 865.5 548.0 861.2 545.1 856.5 544.2 853.9 539.3 853.6 536.4ZM869.7 555.7 872.5 560.8 872.5 563.6 869.1 567.0 865.5 563.6 859.8 563.6 862.7 560.8 864.1 559.4 867.7 558.0ZM859.8 550.8 866.9 548.0 868.8 552.3 866.9 555.1 862.7 556.5 859.8 553.7 859.6 552.3ZM852.8 551.1 853.6 553.7 847.2 559.4 846.3 558.0 851.4 553.7ZM845.2 563.6 847.7 565.0 851.4 569.3 848.0 572.1 848.6 576.3 851.1 580.5 847.2 584.7 844.3 590.3 842.9 594.5 838.7 593.1 833.1 592.3 830.3 593.1 826.6 591.4 826.0 587.5 824.6 586.1 823.2 581.9 823.2 579.1 827.5 577.7 830.3 575.4 834.5 573.5 837.3 570.7 841.0 569.3 842.9 566.5ZM784.6 567.6 790.8 568.7 793.7 572.1 797.3 574.9 800.1 577.7 804.9 580.5 807.7 583.3 810.6 586.1 814.2 590.3 814.8 591.7 814.2 595.9 814.2 599.9 810.6 598.7 804.9 594.5 800.7 590.3 797.9 586.1 795.1 581.9 792.2 577.7 788.0 573.5 785.2 570.7ZM814.2 600.1 817.0 600.1 821.3 601.0 827.5 602.1 828.9 601.6 833.1 602.7 838.7 604.7 838.7 608.1 834.5 607.2 827.5 606.4 820.4 605.2 814.8 603.5 812.8 602.4ZM840.7 606.1 842.9 606.9 844.3 608.1 848.6 608.1 851.4 606.6 854.2 606.9 861.2 606.6 862.7 607.5 859.8 608.1 854.2 608.1 848.6 608.3 844.3 608.6 840.7 608.1ZM866.9 606.6 873.9 607.2 868.3 610.1 864.1 612.0 865.5 610.1ZM851.4 609.5 856.5 610.1 855.6 612.0 851.4 610.9ZM866.9 581.9 863.5 582.2 859.3 585.8 863.8 586.1 863.2 587.5 859.8 591.2 863.2 594.5 862.1 596.8 857.3 591.7 855.3 598.7 852.8 599.0 852.2 593.1 851.4 588.9 853.6 585.5 854.5 581.6 858.4 581.1 862.7 580.5 868.6 579.7ZM876.7 577.1 878.7 580.5 877.6 583.3 876.7 584.7 875.3 581.9 875.3 579.1ZM876.7 591.2 884.6 591.7 883.8 593.4 877.3 593.1ZM885.7 585.5 890.8 585.5 895.0 587.2 897.9 590.3 904.9 591.7 913.3 590.3 917.6 592.3 923.2 594.5 926.9 597.3 932.5 600.1 931.6 603.0 931.6 605.8 934.5 608.6 940.1 612.9 937.3 612.3 931.6 610.1 928.8 608.6 923.2 605.2 921.8 604.4 920.4 607.2 917.6 609.2 913.3 609.2 907.7 605.8 906.3 605.8 904.9 601.6 903.5 597.3 896.4 595.4 893.6 594.0 890.2 592.6 888.0 591.2 892.2 589.7 889.4 588.3 886.6 587.5ZM943.8 595.1 944.3 598.7 938.7 600.7 934.5 599.6 940.1 598.2ZM742.1 555.7 745.2 559.4 746.9 563.6 744.4 566.5 741.8 565.9 741.0 562.2 741.3 558.5ZM917.6 613.5 919.8 618.6 921.2 624.4 925.5 627.3 926.9 631.7 929.7 638.2 935.3 642.0 938.7 646.5 940.9 648.1 944.3 654.2 947.1 657.3 947.7 663.5 948.0 669.9 945.7 679.7 942.3 684.4 939.5 689.9 938.7 696.8 933.1 697.9 928.8 700.4 928.3 702.6 926.0 700.4 923.8 699.7 920.4 700.8 914.7 700.0 911.9 697.9 909.7 693.3 905.5 690.2 906.3 688.1 904.9 685.4 904.3 681.4 903.5 684.7 901.5 688.1 898.1 687.8 897.3 684.7 894.2 681.4 892.2 678.1 885.2 676.4 879.5 677.1 873.9 678.1 866.9 681.4 864.1 684.1 857.0 684.7 848.6 688.1 844.3 688.1 840.4 686.1 841.5 683.1 842.1 677.7 840.1 669.9 837.3 663.5 835.9 658.8 835.9 654.2 836.5 648.1 837.9 645.9 842.9 643.5 845.8 642.0 851.4 640.2 857.0 639.0 860.4 634.6 861.0 631.7 864.1 628.7 869.7 624.4 872.5 622.9 875.3 622.9 878.1 625.8 881.0 625.8 881.8 621.5 884.6 618.6 889.4 617.2 888.0 615.8 889.4 614.3 892.2 617.2 896.4 617.2 901.5 617.8 899.3 620.1 898.7 622.9 897.9 625.8 902.1 628.7 907.7 631.7 911.9 633.1 913.3 630.2 914.7 625.8 914.7 620.1 915.9 617.2 916.2 614.3ZM923.8 708.8 928.8 709.1 933.9 709.5 933.1 715.1 929.7 719.0 925.2 717.1 923.5 711.4ZM1002.6 686.1 1007.7 689.9 1010.5 694.4 1011.9 696.8 1017.5 697.9 1018.9 696.8 1014.7 704.0 1012.8 707.7 1009.7 711.7 1008.0 710.6 1007.7 705.8 1005.7 704.0 1008.0 698.6 1006.3 693.3 1003.5 688.1ZM1002.0 707.7 1006.3 709.5 1007.1 711.4 1004.9 715.1 1003.5 720.9 998.4 724.8 995.9 728.8 992.2 731.3 988.0 730.1 985.2 728.8 986.6 724.8 995.0 719.0 999.2 713.3 1000.6 709.5ZM507.8 379.5 505.6 382.7 511.2 384.8 510.6 387.9 508.9 393.0 510.6 394.0 512.3 397.9 513.5 400.4 516.8 405.1 521.1 407.9 521.1 409.8 519.6 413.0 520.2 414.8 517.7 417.5 510.6 418.4 503.6 420.1 500.2 421.0 503.0 418.4 504.4 415.7 501.9 413.9 503.6 412.1 503.3 408.4 503.6 406.5 507.8 405.6 508.1 402.8 506.1 400.4 502.2 397.9 502.2 395.5 499.4 390.5 499.9 385.3 501.6 382.7 502.2 379.5ZM495.1 397.0 500.2 400.4 499.1 405.1 498.2 411.2 493.2 413.0 488.7 414.3 488.7 409.8 487.8 405.1 492.3 401.3 488.1 401.3 492.9 397.9ZM272.7 334.6 282.5 338.0 286.8 347.9 285.3 351.0 276.9 354.8 271.3 349.1 269.9 344.6ZM285.3 354.8 289.6 357.2 282.5 359.0ZM241.7 306.2 245.9 308.6 241.7 316.5 237.5 315.7ZM360.0 413.9 357.2 418.8 360.0 423.2 365.6 423.2 367.0 427.4 367.9 431.6 367.0 434.9 364.2 434.5 362.8 431.6 360.0 433.7 349.3 431.2 350.1 427.4 352.4 425.3 354.9 418.8ZM334.6 421.4 342.5 423.2 338.9 424.4ZM154.7 417.5 161.4 421.0 167.1 425.3 168.8 428.3 165.1 427.0 160.0 423.2 155.0 418.8ZM141.7 402.3 145.4 405.1 147.4 412.1 144.5 409.8ZM86.8 380.0 88.2 383.7 82.6 388.9 80.3 385.3ZM47.4 370.1 50.2 371.8 46.0 372.9ZM33.3 349.1 40.9 352.3 37.5 354.2ZM47.4 402.8 50.2 405.1 43.2 406.1ZM31.9 408.4 26.3 411.2 19.2 409.8 15.0 412.1ZM283.9 516.4 288.2 516.4 291.0 517.0 293.8 518.5 298.0 520.7 302.2 522.5 307.3 524.6 303.7 526.1 299.4 526.1 297.2 524.0 295.2 521.6 289.6 520.7 283.9 520.7 277.2 520.7 278.6 518.5ZM311.3 526.4 316.3 526.4 319.1 527.0 322.0 528.4 323.6 530.5 319.1 531.4 316.3 531.4 312.1 532.0 306.8 531.4 312.1 530.2 311.3 528.1ZM298.0 530.5 301.7 532.3 298.0 532.6 295.8 531.1ZM327.3 530.5 331.5 531.1 330.4 532.0 327.0 532.0ZM294.4 505.3 299.4 506.2 297.2 510.9 297.7 514.0ZM77.0 525.2 80.3 527.0 77.8 529.3 77.0 526.7ZM70.5 521.3 72.5 522.5 71.0 522.2ZM66.3 519.5 67.7 520.4 66.3 520.4ZM542.2 456.3 543.9 458.9 543.0 464.4 539.9 464.8 539.9 460.8 539.4 457.5ZM542.7 449.5 543.3 453.3 542.2 455.6 540.5 453.3 540.8 451.1ZM560.2 466.9 559.1 470.8 558.8 472.6 551.2 469.8 552.0 467.3ZM582.4 476.7 586.7 477.4 590.3 477.8 589.5 478.8 585.3 478.5 582.4 477.4ZM613.7 476.4 612.0 478.5 609.2 479.8 607.2 477.8 610.6 477.4ZM666.4 547.4 669.7 548.6 666.9 548.3ZM551.8 393.0 550.6 397.9 547.8 397.0 547.2 394.0ZM545.8 395.0 546.1 397.4 544.1 396.5ZM569.8 383.2 567.5 387.9 568.4 385.3ZM978.1 640.5 980.9 642.0 986.6 648.1 983.7 646.5ZM1017.5 631.7 1018.9 633.1 1017.5 635.2 1015.6 634.0ZM986.0 625.8 988.0 630.2 985.2 627.3ZM957.0 603.0 962.6 605.8 969.7 610.1 971.1 612.9 964.0 608.6 958.4 604.4ZM951.6 598.7 954.2 601.6 953.3 602.4 951.4 599.6ZM940.1 590.3 944.3 593.1 945.7 596.8 941.5 591.7ZM626.7 599.6 627.5 601.3 626.7 601.0ZM445.9 535.5 451.8 536.4 450.1 541.1ZM478.3 497.7 477.4 500.9 472.9 501.5 469.8 499.9ZM347.3 751.4 353.5 752.3 350.1 755.4ZM258.6 582.7 261.4 584.7 260.0 586.1ZM444.5 469.1 437.4 466.9 436.0 465.1ZM343.1 552.8 344.5 554.8 342.2 555.1ZM338.6 531.1 339.7 532.3 339.1 531.7ZM342.2 536.4 343.9 537.9 342.5 538.1ZM343.9 541.1 345.1 542.5 343.9 542.2ZM344.5 543.4 344.8 544.5 344.2 544.2ZM301.7 511.8 304.2 514.9 302.8 515.5ZM307.0 518.5 310.7 521.6 308.4 520.4ZM931.6 439.8 929.1 442.5 930.2 441.0ZM955.0 420.1 953.6 421.0 956.1 418.8ZM943.8 433.3 942.1 434.5 944.3 431.6ZM983.2 396.5 985.4 398.9 983.5 397.9ZM168.8 246.4 177.5 233.3 187.7 227.5 193.5 234.8 197.9 233.3 203.8 240.6 208.1 237.7 211.0 246.4 218.3 249.3 219.8 255.2 211.0 259.6 200.8 262.5 195.0 256.6 186.3 252.3 177.5 249.3ZM193.5 223.1 200.8 211.4 208.1 212.9 206.7 220.2 203.8 228.9 196.5 228.9ZM218.3 202.7 227.1 201.2 232.9 210.0 237.3 220.2 234.4 224.5 228.5 223.1 221.3 215.8ZM238.8 210.0 246.1 211.4 250.4 220.2 253.3 226.0 247.5 227.5 241.7 220.2ZM216.9 224.5 221.3 226.0 222.7 233.3 218.3 231.9ZM256.3 247.9 270.9 247.9 288.4 249.3 292.7 255.2 289.8 262.5 273.8 262.5 259.2 261.0 253.3 255.2ZM221.3 239.1 235.8 237.7 247.5 234.8 254.8 239.1 253.3 252.3 253.3 259.6 244.6 259.6 238.8 253.7 227.1 252.3 222.7 247.9ZM244.6 185.0 317.5 185.0 314.6 199.8 302.9 208.5 297.1 217.3 298.6 228.9 294.2 239.1 286.9 242.1 270.9 240.6 265.0 234.8 265.0 224.5 259.2 217.3 250.4 205.6 244.6 198.3ZM164.4 264.4 174.7 262.9 185.0 268.8 190.9 274.7 180.6 286.5 173.2 293.9 165.9 293.9 161.5 286.5ZM182.1 282.1 192.4 274.7 204.2 279.1 211.5 273.2 218.9 270.3 221.8 279.1 221.8 292.4 229.2 298.3 233.6 304.2 230.6 313.0 226.2 317.4 215.9 315.9 204.2 317.4 192.4 318.9 189.4 310.0 185.0 304.2 183.5 296.8 189.4 292.4ZM226.2 276.2 236.5 270.3 242.4 268.8 242.4 280.6 242.4 290.9 236.5 290.9 229.2 283.5ZM245.4 268.8 261.6 267.4 258.6 279.1 251.3 289.4 246.8 285.0ZM263.4 272.0 277.7 270.3 289.5 271.8 300.9 280.0 310.3 288.0 319.6 297.4 327.7 306.8 333.0 317.5 341.1 325.5 343.7 333.6 335.7 342.9 333.0 355.0 330.4 363.0 322.3 357.7 310.3 347.0 298.2 342.9 296.9 337.6 306.2 332.2 310.3 325.5 303.6 321.5 295.5 314.8 287.5 306.8 276.8 304.1 266.1 301.4 262.1 293.4ZM467.1 185.0 467.1 191.0 462.0 203.7 459.5 223.9 462.0 241.6 459.5 261.9 451.9 279.6 451.9 299.9 441.8 312.5 426.6 325.2 411.4 337.8 401.3 363.2 388.6 373.3 375.9 358.1 368.4 342.9 363.3 327.7 368.4 310.0 365.8 297.3 360.8 287.2 355.7 272.0 350.6 256.8 343.0 249.2 327.8 244.2 320.3 236.6 312.7 229.0 310.1 216.3 315.2 208.7 331.6 203.7 332.9 191.0 332.9 185.0ZM446.8 332.8 457.0 330.2 472.2 330.2 477.2 337.8 472.2 347.9 462.0 350.5 451.9 347.9 445.6 340.4ZM772.8 185.0 786.8 185.0 796.1 197.2 797.7 206.6 789.9 209.7 780.6 203.5 774.3 197.2ZM799.3 203.5 808.6 200.3 814.8 212.8 811.7 220.6 796.1 220.6 799.3 212.8ZM898.9 247.0 908.2 242.4 917.6 243.9 926.9 250.2 923.8 256.4 911.3 261.0 902.0 257.9ZM926.9 251.7 939.4 253.3 942.5 257.9 930.0 259.5ZM908.2 265.7 917.6 268.8 920.7 275.0 911.3 276.6ZM709.0 236.1 710.5 242.4 699.6 250.2 687.2 262.6 677.8 281.3 674.7 296.9 665.4 300.0 660.7 290.6 662.3 275.1 671.6 256.4 687.2 243.9 699.6 237.7ZM545.0 195.0 554.2 193.0 562.2 192.3 567.5 196.3 572.8 206.9 575.4 213.5 570.1 217.5 566.2 228.1 563.5 240.0 555.6 228.1 548.9 217.5 545.0 208.2ZM564.8 185.0 592.7 185.0 590.0 199.0 582.1 204.3 572.8 201.6 567.5 196.3ZM572.8 214.9 580.7 216.2 587.4 224.1 579.4 232.1 574.1 228.1ZM590.0 208.2 599.3 206.9 602.0 208.2 592.7 212.2ZM916.1 360.0 940.0 350.0 985.0 335.0 1025.0 330.0 1025.0 355.0 1021.8 356.1 1013.8 358.8 1004.4 362.8 996.4 369.5 987.0 369.5 977.6 373.5 975.0 386.9 972.3 400.3 960.2 413.7 954.9 419.1 953.5 395.0 956.2 384.3 966.9 376.2 976.3 364.2 977.6 358.8 966.9 366.9 965.6 361.5 957.6 364.2 950.9 373.5 916.1 374.9Z" fill="#ffff00" stroke="#000" stroke-width="2.3" stroke-linejoin="round" paint-order="stroke"/>
<path d="M598.2 456.3 595.7 455.2 594.6 453.3 594.3 451.5 596.5 447.6 597.1 443.7 599.9 440.6 602.2 436.5 605.0 435.3 610.6 437.8 607.8 440.6 610.6 444.1 613.4 443.7 616.2 441.8 619.3 440.2 620.5 441.8 623.8 444.9 628.9 447.6 633.1 451.5 633.1 455.2 628.9 457.1 621.9 457.1 616.2 454.5 613.4 453.3 606.4 455.2 600.8 456.3 598.5 456.7ZM619.3 440.2 614.8 437.8 616.2 435.3 624.7 432.9 623.3 436.5 622.7 439.8 620.2 441.0ZM596.5 457.1 598.2 457.5 597.9 459.3 593.7 459.7 591.7 458.6Z" fill="#8080ff" stroke="#000" stroke-width="1"/>
<path d="M665.5 435.7 665.5 441.0 658.5 443.7 662.7 451.5 664.1 455.2 665.0 457.1 665.5 460.8 667.8 466.2 668.3 471.5 662.7 472.9 655.7 469.8 654.0 466.2 655.7 460.8 654.8 457.1 653.4 455.2 650.0 449.5 649.2 443.7 648.6 439.8 655.7 435.7 661.3 433.7ZM685.2 435.7 689.5 436.9 688.1 443.7 683.8 447.6 681.0 443.7 682.4 439.8ZM724.7 434.5 737.3 435.3 738.7 437.8 733.1 437.8 726.1 436.9ZM824.6 394.5 824.6 400.4 820.4 407.5 814.8 413.0 810.6 414.3 809.1 413.0 816.2 409.8 821.8 405.1 823.2 397.9ZM267.0 426.2 277.5 429.5 278.0 435.7 272.7 434.9 262.8 435.7 257.2 434.5 261.4 431.6ZM276.9 439.8 273.0 445.7 273.5 451.5 271.3 454.5 269.6 453.3 269.0 443.7 271.3 438.6 275.5 437.8ZM278.3 436.9 286.8 437.8 291.5 441.8 286.2 443.7 285.3 448.8 281.7 445.7 279.7 440.2ZM291.0 452.6 286.8 454.9 282.0 455.2 286.8 453.3 293.8 449.9ZM298.0 448.4 292.4 448.4 301.4 444.9ZM169.9 327.6 182.6 334.6 175.5 341.4 164.3 338.0 162.8 332.5ZM186.8 357.2 203.7 360.2 198.0 364.4 188.2 366.1 186.8 362.0ZM240.9 403.7 243.1 411.2 244.2 418.8 243.1 418.8 238.9 412.1 237.5 405.1ZM203.7 374.6 217.8 376.8 213.5 378.4 203.7 377.3ZM609.2 582.2 612.9 583.9 611.5 586.9 609.2 590.3 605.8 589.7 605.5 584.7 607.2 582.5ZM598.8 592.6 599.9 595.9 601.6 601.6 603.6 607.2 602.7 607.8 599.3 600.1 597.9 594.5ZM612.0 610.1 613.4 615.8 614.3 622.9 613.4 623.8 612.0 617.2ZM603.6 362.0 608.6 370.1 603.6 371.8 600.8 366.1ZM614.8 355.4 619.1 366.1 614.8 363.2ZM320.0 626.4 322.5 630.2 319.7 628.7Z" fill="#8c8ce6" stroke="#1a1ab0" stroke-width="1.1"/>
<path d="M169.3 427.8 169.9 425.3 248.2 425.3 248.2 424.0 253.0 427.0 264.2 429.5 268.5 433.7 278.3 435.7 283.9 439.8 284.2 449.5 282.3 453.3 288.2 452.6 293.8 450.3 293.8 447.6 300.8 445.7 305.6 441.8 314.9 441.8 316.9 440.6 319.1 435.7 321.4 432.0 324.8 432.9 325.3 441.0 327.9 442.5M119.2 307.8 119.2 370.1 129.1 372.9 134.7 376.2 140.3 382.7 147.4 390.5 150.2 397.9 148.5 399.4M186.5 486.9 193.3 486.2 203.7 490.8 211.6 490.8 216.4 489.2 220.6 493.5 222.0 496.7 226.2 498.3 230.4 495.7 234.7 501.5 237.5 506.2 242.5 508.1M124.8 371.8 249.3 371.8M178.3 371.8 178.3 403.7 188.2 416.6 195.2 425.3M206.5 425.3 206.5 371.8M230.7 425.3 229.0 371.8M248.2 425.3 248.2 408.4 265.6 388.9M306.5 440.6 292.4 435.7 292.4 414.3M355.5 414.3 336.0 412.1 327.6 397.9 336.0 380.0M167.1 371.8 155.8 360.2 141.7 344.6 133.3 316.5M229.0 371.8 209.3 346.6 176.9 320.2M186.8 425.3 186.8 453.3 203.7 453.3 203.7 457.1 223.4 457.1 223.4 471.5 249.9 471.5M166.5 453.3 178.3 453.3 178.3 464.4 193.5 478.5M223.4 425.3 223.4 441.8 223.4 457.1M195.2 471.5 226.2 471.5 226.2 488.5 216.1 488.5M242.5 425.3 244.5 447.6 247.9 460.8 249.9 473.3 251.6 483.2 252.1 496.1M229.0 460.8 247.9 460.8 258.6 458.6 261.1 451.5 259.4 447.6 256.3 435.7M264.2 473.3 286.2 473.3 302.5 472.9M289.6 453.3 289.6 461.9 302.8 461.9M269.9 454.5 268.5 464.4 265.1 471.5 262.5 478.5 258.3 491.8 267.3 491.8 267.9 478.5 278.9 478.5 276.9 491.8 269.9 493.5M269.0 453.3 291.0 451.5M309.8 441.8 309.3 457.1 314.1 453.3 316.0 441.8M265.1 532.6 260.0 532.6 260.0 537.6 256.6 542.2M265.1 532.6 265.1 538.1 265.6 542.2 262.5 544.2M265.1 540.8 269.9 545.4 275.5 543.7 282.0 540.8M274.9 551.7 280.6 552.6M283.7 556.5 282.8 560.2M298.3 558.8 296.9 563.1M313.5 550.0 311.0 555.1 312.4 560.8 318.9 563.6 326.2 566.2 325.3 572.1 327.9 579.1 319.7 579.9 319.4 595.1 312.1 610.1 320.6 614.3 322.8 618.6 320.6 634.6 327.0 649.3 339.4 646.5 340.8 640.5 352.4 639.0 353.2 646.5 361.4 652.6 361.4 662.9 351.5 663.2 354.3 657.3 353.2 647.1M319.7 579.9 319.1 581.9 305.6 583.9 303.7 587.5 295.2 590.3 289.6 594.5M327.9 579.1 336.0 577.7 345.9 570.7 347.3 568.7 345.9 562.2 347.9 559.4M358.6 576.3 352.9 572.1 345.9 567.9M361.4 576.9 364.2 567.0M361.4 576.9 369.8 577.1 370.7 571.2M320.6 634.6 318.0 633.1M327.0 649.3 323.4 661.9 319.1 681.4 316.3 695.1 313.8 709.5 314.4 728.8 309.8 745.6 320.6 755.9M339.4 646.5 353.2 647.1M361.4 662.9 354.1 672.2 365.9 683.7M354.1 672.2 351.8 684.7M312.1 610.1 309.3 605.8 310.7 597.3 319.4 595.1M324.8 665.1 341.7 671.5 351.5 676.4M319.1 688.1 336.0 691.6 341.7 700.4M510.6 475.7 512.9 488.5 491.8 498.3 491.8 502.4 479.7 502.4M491.8 503.7 482.5 510.9 479.7 522.2 468.4 522.2M540.2 471.9 543.0 488.5 544.4 495.1 544.4 507.8 550.1 515.5 532.6 527.6 528.1 528.7 513.5 520.7 502.2 510.9 491.8 503.7M548.7 484.5 544.4 491.8 544.4 495.1M586.7 490.2 586.7 520.1 583.9 526.1 583.9 527.6 583.9 540.8 579.6 548.0 580.5 555.1 583.9 558.0 593.7 569.3 597.9 570.7 603.0 573.5 610.6 570.7 611.2 559.4 612.3 556.5 617.1 549.4 619.1 542.2 624.7 532.0M586.7 520.1 619.9 520.1M550.1 515.5 558.5 517.0 583.9 526.1M558.5 517.0 561.3 540.8 555.7 546.5 554.3 544.5 538.8 545.1 526.4 547.1 526.4 550.3 523.9 565.0M528.1 528.7 526.1 539.9 516.8 540.8 510.6 552.3 500.8 552.3 500.8 555.1 493.7 556.5 493.2 562.2 485.3 560.8 482.5 555.1 483.9 548.0 477.7 548.0 476.8 536.4 469.8 537.6M502.2 514.0 502.2 540.8 482.5 539.3 481.9 542.2M510.6 552.3 517.7 552.3 520.5 551.7 521.1 565.9M500.8 552.3 508.4 555.1 508.4 569.3M500.8 555.1 493.2 562.2 495.1 571.0M555.7 546.5 557.9 549.4 558.5 553.7 559.9 562.2 559.9 572.1 561.9 577.7 553.7 577.1 548.1 577.1 541.6 571.2M580.5 555.1 572.6 559.4 559.9 562.2M593.7 569.3 579.6 570.7 568.4 569.3 568.4 573.5 561.9 577.7M568.4 573.5 565.6 586.1 561.3 594.5 551.5 597.3M548.1 577.1 547.8 590.3 551.5 593.1 549.5 596.2M550.9 599.6 562.7 600.1 565.6 604.4 569.8 605.8 577.4 603.0 579.1 614.3 583.9 614.3 578.2 620.1 575.4 634.6 585.3 634.6 587.5 632.5 593.7 629.6 600.8 627.6 593.7 618.6 597.9 620.1 602.4 607.2 599.3 595.9 599.6 586.1 603.6 579.1 603.0 576.9 603.0 573.5M549.5 632.5 568.4 632.8 575.4 634.6M575.4 634.6 572.6 646.5 572.6 654.8 562.7 666.7M587.5 632.5 597.9 646.5 595.1 658.8 606.4 654.2 608.9 661.3M597.9 646.5 604.4 647.4 608.9 630.2 601.9 627.3M604.4 647.4 606.4 658.8M599.6 586.1 612.0 586.1 625.5 596.5M612.0 570.4 617.6 572.1 627.5 573.5 633.1 572.4 633.1 588.1M633.1 572.4 641.6 569.3 650.0 560.8 643.0 558.0 637.4 552.3M611.2 559.4 613.4 548.0 619.1 542.2M629.8 612.9 614.8 615.8 615.7 624.4 615.1 630.2 600.8 627.6M602.4 607.2 609.2 610.1 610.0 617.2 609.8 622.9M619.9 520.1 621.3 527.6M583.9 540.8 592.3 552.3 611.2 559.4M509.2 496.7 538.8 523.1M485.3 555.1 493.7 549.4M511.2 448.0 520.5 451.5 525.3 451.8M498.0 453.3 495.1 464.4 495.4 470.8M537.4 446.8 536.0 438.2 533.4 435.7 537.4 431.6 539.4 425.3 534.6 423.2 533.4 420.5 524.7 416.6 523.3 416.1M537.4 431.6 544.4 430.8 552.9 431.6 555.1 426.6 550.3 419.7 557.9 417.0 558.5 414.8 556.5 403.2M533.4 420.5 533.2 416.6 536.0 410.7 536.5 406.1M540.5 398.4 544.1 398.9M536.0 438.2 541.6 436.1 545.8 433.7 554.9 435.3 555.1 439.4M554.9 435.3 562.7 435.7 564.1 429.5 564.1 427.0 568.4 425.3 569.8 423.2 579.6 425.3 582.7 414.3 582.4 403.2 580.5 400.8M557.9 417.0 562.7 419.7 569.8 423.2M564.1 427.0 569.2 430.4 579.6 429.1 578.2 431.6 573.4 437.3 569.8 439.8 562.7 435.7M579.6 429.1 591.5 428.3 599.9 441.0M573.4 437.3 579.6 442.9 580.5 446.8 596.8 445.7M579.6 442.9 583.9 447.6 579.6 453.3 574.3 457.1 574.6 460.8M569.8 439.8 570.3 443.7 571.2 449.5 571.2 453.3M581.0 456.0 589.5 455.6 595.1 453.3M582.7 414.3 592.3 412.5 602.2 412.1 610.6 410.2 616.2 418.8 628.9 423.2 623.8 431.6M582.4 403.2 591.5 395.0 595.7 392.0 593.7 385.3 595.1 375.1M575.4 393.0 585.8 391.0 595.7 392.0M577.7 383.7 586.7 385.3 593.7 385.3M592.3 412.5 591.5 428.3M594.6 369.0 605.0 357.2 599.3 334.6 596.5 320.2 597.4 312.6 600.8 305.4M574.0 314.2 583.3 334.6M548.7 377.3 551.5 363.2 550.6 351.0 557.1 334.6 567.0 316.5 574.0 312.6 576.8 312.6 589.5 304.6 596.5 305.4M595.7 392.0 603.6 397.9 606.4 406.5 610.6 410.2M595.1 453.3 590.3 454.5M633.1 455.2 638.8 457.1 642.4 462.6 642.4 471.2 635.4 471.5 623.3 472.2 618.2 475.0M628.9 447.6 641.6 453.3 647.2 455.2 653.1 454.1M642.4 471.2 645.8 476.7 650.0 486.9 650.6 491.8 652.9 495.1M635.4 471.5 631.7 483.9 626.1 487.5 620.5 490.2 617.6 483.9 618.2 479.8M631.7 483.9 634.5 491.8 642.2 497.7 647.2 498.0 651.4 496.7M614.6 496.7 620.5 490.2M662.7 514.0 672.6 518.5 662.7 529.0 665.8 536.1M637.4 533.5 647.2 534.9 662.7 529.0M672.6 518.5 674.0 514.0 674.5 509.3M642.4 462.6 651.4 464.4 653.7 468.0M668.1 470.5 678.2 469.8 688.6 472.9 687.2 480.2 690.3 490.5 687.8 495.7 693.1 503.1 689.7 510.3M688.6 472.9 697.9 470.1 707.8 470.5 713.4 471.5 717.6 469.8 720.4 472.6 716.2 475.0 715.9 481.9 711.4 488.5 703.5 491.8 696.5 497.0 687.8 495.7M720.4 472.6 727.5 475.7 731.7 480.2 727.5 486.9 726.1 491.8 718.5 498.3 713.4 502.4 716.2 512.1 709.7 514.9M731.7 480.2 740.2 485.2 738.7 491.8 744.7 494.4 742.1 498.9 751.4 503.7 764.1 506.2 766.3 501.5 775.4 504.0 783.8 500.9 789.4 503.1 782.4 514.0 777.0 521.6M764.1 506.2 765.5 510.9 766.9 519.5M769.2 506.2 775.4 510.3 773.9 515.5 776.2 514.0 776.2 522.8M790.8 500.9 792.2 514.0 800.7 521.6 798.2 524.9 791.4 530.5 793.7 539.3 795.1 549.4 793.7 555.1M800.7 521.6 804.9 518.5 817.6 523.1 814.2 533.5 819.0 542.2 813.4 550.6 810.6 553.7M798.2 524.9 804.9 532.0 813.4 542.2 804.9 545.1 804.9 549.4M798.4 565.0 803.5 566.5M858.4 406.1 848.0 423.2 852.8 431.6 847.2 435.7 831.7 441.8 817.6 451.5 800.7 451.5 788.0 449.5 785.2 443.7 771.1 440.6 769.7 429.5 763.5 424.0 759.9 425.3 750.0 433.7 748.6 441.8 742.1 450.3 731.7 458.9 724.1 463.3 727.5 471.5 727.5 475.7M858.4 406.1 871.1 409.8 875.3 423.2 895.9 429.5 890.8 441.8 884.1 451.5 876.7 453.3 866.6 460.8M763.5 424.0 775.4 418.8 790.8 419.7 794.5 412.1 813.4 419.7 838.7 423.6 844.3 421.0 848.0 423.2M653.1 435.7 648.6 427.4 651.4 418.8 664.1 414.3 681.0 417.5 689.5 416.6 688.1 405.1 699.3 400.4 710.6 398.9 716.2 396.0 723.3 405.1 731.7 402.8 741.6 414.3 751.4 417.5 760.4 424.0 762.1 425.3M671.2 453.3 674.0 456.3 682.4 457.1 683.8 447.6 688.1 453.3 689.5 457.1 699.3 449.5 707.8 455.2 711.4 458.9 714.8 456.0 717.6 451.1 726.1 449.5 740.2 449.5M668.1 470.5 665.5 460.8 668.3 457.1M689.5 457.1 695.1 462.6 703.5 470.5 709.2 466.2 714.8 462.6 721.8 459.7 724.1 463.3M884.3 451.5 884.1 452.2M871.1 466.9 877.6 465.8M876.7 453.3 884.1 452.2M804.9 518.5 812.0 517.0 820.4 521.6M913.3 590.6 913.3 608.9M847.2 571.2 840.1 579.1 827.5 580.5 824.9 577.7M868.0 608.6 868.6 610.1M686.6 308.6 685.2 327.6 683.8 360.2 682.4 382.7 682.4 402.8 681.0 416.6M743.0 278.0 747.2 320.2 755.6 347.9 759.9 371.8 764.1 390.5 769.7 405.1 768.3 416.6M823.2 278.0 814.8 304.6 814.8 334.6 817.6 360.2 823.2 382.7 827.5 393.0M878.1 287.4 866.9 320.2 873.9 354.2 885.2 371.8 881.0 387.9 868.3 397.9 858.4 405.1M969.7 306.2 961.2 334.6 950.0 347.9 944.3 363.2 940.1 371.8M1011.9 360.2 1003.5 344.6 1009.1 331.1 1006.3 311.0M633.1 332.5 643.0 351.0 644.4 369.0 648.6 385.3 643.0 402.8 644.4 414.3M623.3 397.9 628.9 387.9 620.5 377.3 617.6 363.2M707.8 393.0 713.4 371.8 714.8 354.2 707.8 331.1M797.9 393.0 789.4 371.8 778.2 347.9 786.6 320.2 786.6 287.4M851.4 382.7 845.8 366.1 848.6 347.9 840.1 323.9M899.3 395.5 893.6 380.0 904.9 360.2 910.5 341.4 910.5 316.5M908.6 689.9 912.8 685.4 919.0 686.4 923.2 691.2 931.6 692.3M915.9 685.4 916.2 678.1 926.0 671.5 934.5 666.7 941.5 660.4M375.5 584.7 361.4 588.9 347.3 592.6 338.9 594.5 324.8 593.1 319.1 595.1 309.3 595.9 303.7 605.8M350.7 592.8 337.4 605.8 332.4 612.9 329.0 622.9M347.3 592.0 336.0 584.7 327.6 580.5M362.2 590.0 354.3 603.0 355.8 614.3M369.8 587.5 368.4 600.1 367.0 614.3M377.7 587.5 381.1 600.1 379.7 617.2 381.1 625.8M413.8 612.9 393.8 620.1 389.5 637.6M351.5 684.7 350.7 663.5 362.5 657.3 369.8 646.5 375.5 637.6M351.2 662.9 353.2 646.5 354.3 628.7M344.5 559.1 330.4 561.4 326.2 566.5 325.6 572.1M343.1 594.0 333.2 603.0 320.6 610.1M331.0 590.3 324.8 600.1 312.1 607.2" fill="none" stroke="#101030" stroke-width="0.9"/>
<path d="M152.4 302.6l4.1 3.5M155.6 299.8l5.2 1.3M157.6 301.3l-3.8 4.2M164.1 307.7l-0.9 3.5M161.1 304.8l-2.4 4.5M156.5 300.3l-3.2 0.8M168.5 308.4l0.4 2.4M171.3 309.2l-1.5 1.7M172.4 309.6l-1.3 4.0M172.6 309.7l0.3 4.9M179.0 312.2l-0.7 2.4M172.9 309.8l-2.5 1.8M191.9 319.0l-2.7 1.7M186.0 315.4l-3.0 2.0M190.3 318.1l-2.2 1.0M186.1 315.5l-2.3 1.9M198.0 320.7l1.2 2.9M195.0 320.4l0.8 4.3M201.4 321.1l-0.2 3.5M206.0 321.7l-0.8 3.9M213.8 317.2l2.3 1.5M214.2 316.9l4.0 3.4M208.1 320.7l0.1 5.0M216.6 316.8l-3.4 4.7M220.0 317.4l1.1 3.5M215.3 316.5l0.8 5.8M229.3 319.6l-1.8 2.4M228.4 319.3l0.4 3.1M229.5 319.6l0.1 2.3M236.6 318.1l1.5 5.2M234.2 319.2l4.0 4.0M232.0 320.2l1.4 2.7M240.6 316.0l2.4 1.2M243.5 312.0l2.3 1.1M245.3 309.5l4.1 4.3M247.9 300.0l4.2 -0.9M246.0 308.2l1.6 1.4M247.9 299.9l5.5 -2.0M247.7 300.7l3.4 1.9M249.2 293.4l5.6 -2.1M249.5 291.4l4.0 2.9M249.8 289.7l4.2 2.4M255.3 299.3l-3.3 0.6M255.2 299.1l-4.8 2.7M254.6 297.7l-5.2 1.7M253.7 295.5l-3.4 1.1M256.6 307.8l-2.3 -0.1M257.2 312.5l-5.4 -0.9M256.3 305.2l-4.9 0.1M256.4 305.8l-4.4 3.1M263.5 318.3l-1.6 1.4M261.3 316.3l-2.4 1.6M261.4 316.4l-4.2 1.4M266.7 319.3l1.7 1.2M273.7 308.4l2.8 0.1M275.0 305.7l4.3 1.7M274.9 305.9l2.6 2.0M271.0 314.1l2.6 2.7M281.9 306.1l-0.5 5.5M279.6 305.5l0.7 3.2M284.6 309.4l-5.3 0.9M285.5 310.8l-3.8 4.4M286.8 314.5l-3.7 1.0M286.8 315.0l-3.6 -0.5M286.8 318.2l-3.0 -1.3M281.2 331.0l-3.8 -0.6M286.6 324.2l-5.5 -0.6M282.8 329.0l-3.9 -1.8M275.1 331.1l-0.9 -1.9M277.7 331.1l0.8 -1.9M272.7 333.6l-2.5 0.5M271.2 337.6l-3.3 -1.8M271.1 337.8l-3.3 -4.1M267.0 345.8l-2.4 -1.5M269.1 342.5l-1.8 -1.1M262.2 351.0l-2.3 -1.4M264.0 349.4l-3.2 -3.6M257.7 357.2l-4.5 -2.1M256.8 358.6l-5.6 -0.4M256.1 359.7l-4.9 -0.6M253.9 362.6l-1.8 -4.1M254.2 362.2l-1.8 -3.9M250.9 369.7l-4.5 0.9M297.6 367.6l4.8 -3.2M297.8 369.9l3.9 -1.4M297.4 365.5l4.5 -0.3M296.9 358.7l4.1 -1.2M300.5 358.7l-3.6 4.0M298.9 358.3l-3.9 3.7M301.9 359.1l0.5 4.3M311.0 361.8l-1.8 3.6M306.7 360.3l-2.1 5.5M309.9 361.4l-2.1 4.8M317.3 366.0l-1.7 4.5M317.5 366.3l-3.6 0.5M138.9 389.2l3.9 -1.2M136.2 386.7l3.7 -1.0M132.4 381.9l2.2 -3.8M128.4 378.7l0.9 -3.7M131.6 380.9l0.6 -4.1M124.7 376.1l2.7 -3.8M121.5 373.8l1.7 -4.0M118.9 372.4l3.7 -1.9M109.7 370.2l-0.6 -4.9M116.8 371.6l2.9 -4.8M112.5 370.7l-0.3 -3.4M96.8 372.5l-4.8 -1.4M98.4 370.4l-2.4 -5.4M95.0 374.6l-1.1 -1.9M322.8 746.8l-2.1 -0.5M322.4 749.7l-4.8 0.4M322.3 749.6l-2.4 1.2M324.3 758.1l-4.4 2.5M320.1 768.7l-1.1 -5.6M312.2 760.9l4.3 -4.0M316.3 765.5l2.2 -0.4M309.0 757.3l2.7 -2.3M312.6 761.4l3.1 -0.4M310.8 759.4l0.7 -2.9M313.2 762.0l3.2 -1.3M304.5 745.1l3.6 -2.6M306.0 752.5l2.9 -1.6M304.0 743.0l4.1 -0.2M303.7 741.4l3.0 -0.5M303.7 739.4l4.2 -2.9M303.7 731.1l5.0 2.0M303.7 740.3l3.0 0.8M303.7 740.1l3.9 -0.1M307.7 721.3l2.6 3.5M304.9 726.4l4.8 2.0M307.5 721.6l1.5 1.8M307.9 719.3l4.2 0.1M307.9 719.7l5.2 -1.2M309.4 709.4l2.3 -0.4M309.4 708.4l4.8 -0.6M309.4 698.2l2.4 -0.4M309.4 700.5l5.5 2.1M309.4 698.5l2.0 -0.4M311.0 692.9l4.0 1.4M541.2 379.8l-3.3 -4.6M541.5 379.6l-0.6 -3.7M531.4 376.1l5.6 0.7M530.7 371.6l4.6 -2.0M530.4 365.8l2.1 -1.0M530.4 366.7l4.0 -0.5M530.5 362.9l4.3 2.2M531.0 361.8l3.1 1.0M534.2 356.5l0.3 2.3M542.8 349.3l1.3 4.5M539.8 352.0l4.6 2.5M278.7 336.7l-4.2 3.7M279.0 336.8l-1.1 1.9M273.8 335.0l-4.2 4.2M283.8 341.1l-2.7 0.5M285.7 345.5l-5.7 1.5M283.1 339.3l-2.9 3.9M285.5 350.6l-3.7 -3.5M278.0 354.3l0.5 -4.2M279.9 353.4l-2.1 -3.4M282.4 352.4l-1.5 -1.4M272.4 350.3l2.4 -1.6M272.5 350.4l3.4 -3.3M270.8 347.7l2.4 -1.9M271.7 338.1l3.3 3.4M270.8 341.3l4.1 4.0M270.7 341.7l5.3 2.4M289.4 357.1l-1.6 4.8M287.6 357.7l-1.1 -3.9M289.3 357.3l-1.1 -5.3M283.9 357.0l4.8 1.4M242.5 306.7l-0.9 4.2M244.5 311.2l-2.3 0.1M244.4 311.4l-2.1 -3.5M243.2 313.6l-3.4 -1.4M240.7 316.3l2.6 -2.9M238.0 314.5l3.0 2.2M240.7 308.5l3.5 2.3M241.4 306.8l5.6 0.7M171.5 242.3l2.2 3.1M173.8 238.9l1.7 4.1M170.7 243.5l2.2 1.9M170.1 244.4l5.4 2.3M172.6 240.6l2.1 3.1M186.8 228.0l3.7 2.9M181.1 231.2l3.6 3.2M186.5 228.2l4.1 3.6M181.2 231.2l0.7 2.8M188.0 227.8l-1.7 4.5M192.6 233.6l-3.5 2.3M188.3 228.2l-1.4 1.6M197.8 233.3l-0.5 4.4M198.3 233.8l-0.7 2.3M202.0 238.4l-1.6 2.2M201.8 238.2l-3.0 3.7M205.8 239.2l1.6 2.7M209.1 240.8l-2.8 2.0M208.9 240.2l-1.9 2.4M209.0 240.4l-3.6 2.5M211.8 246.7l-1.8 5.1M214.7 247.9l-2.4 2.2M219.4 253.7l-4.5 0.3M219.3 253.4l-3.8 1.4M216.4 256.9l-1.9 -3.5M215.1 257.5l-0.5 -4.1M211.9 259.1l-2.5 -1.5M207.9 260.5l0.2 -2.1M204.7 261.4l-1.9 -2.5M202.1 262.1l-0.3 -5.3M196.8 258.4l3.4 -3.7M198.5 260.2l4.0 -1.3M186.4 252.3l4.3 -3.7M194.4 256.3l2.6 -1.6M190.3 254.3l0.9 -4.0M178.7 249.7l3.2 -2.5M185.6 252.1l-1.5 -5.8M185.0 251.9l1.7 -3.1M176.5 249.0l3.2 -2.8M173.7 248.0l2.1 -4.6M172.4 247.6l0.7 -2.6M200.1 212.6l4.6 1.0M196.8 217.9l3.9 1.5M197.7 216.3l4.5 -0.1M195.1 220.5l4.5 1.0M201.3 211.5l-0.0 5.0M207.8 212.8l1.2 4.1M207.2 217.5l-2.6 -1.6M207.1 218.2l-4.7 1.7M206.6 220.5l-5.2 0.6M206.1 222.0l-2.1 0.2M205.3 224.3l-5.8 -0.6M201.9 228.9l-2.0 -4.9M199.2 228.9l2.2 -3.9M196.4 228.6l3.5 -2.5M194.0 224.1l2.9 -0.7M219.9 202.4l-1.5 3.7M220.4 202.3l-1.0 2.9M224.2 201.7l1.2 1.9M228.5 203.3l-3.1 0.5M231.2 207.4l-5.5 2.2M230.7 206.7l-3.4 1.1M235.1 215.0l-2.0 0.9M234.6 213.9l-2.4 3.4M233.0 210.3l-5.0 3.2M236.3 221.6l-2.0 -1.7M229.0 223.2l0.6 -2.6M231.5 223.8l1.5 -4.8M226.8 221.4l2.4 -1.3M227.9 222.5l1.3 -5.3M227.1 221.7l3.6 -1.4M219.4 207.7l5.0 0.4M219.1 206.3l2.2 0.4M220.9 213.9l1.9 -1.9M221.2 215.4l5.1 -2.0M239.4 210.1l-1.2 1.8M243.2 210.8l2.0 5.3M246.6 212.4l-2.1 2.3M246.6 212.4l-2.7 0.8M246.8 212.9l-2.5 1.1M251.5 222.4l-2.4 1.0M251.9 223.1l-3.1 1.7M253.1 226.1l-2.6 -3.6M251.4 226.5l0.4 -2.0M244.1 223.2l2.9 -2.1M242.0 220.6l1.7 -1.8M243.4 222.3l3.2 -1.4M239.1 210.9l1.9 -1.1M240.9 217.2l5.0 0.3M239.7 213.1l4.5 -3.5M218.6 225.1l-3.3 4.3M221.5 226.8l-5.9 -0.6M222.5 232.3l-3.4 0.2M218.5 232.0l2.2 -5.1M217.1 225.3l5.9 1.3M217.4 227.0l4.8 -3.4M262.2 247.9l1.8 3.8M267.7 247.9l-0.3 2.2M260.4 247.9l-0.4 3.3M259.1 247.9l-1.6 3.4M270.7 247.9l0.5 3.0M283.0 248.9l-1.3 2.4M274.4 248.2l0.5 4.2M270.9 247.9l1.0 1.7M276.6 248.4l-1.9 2.4M282.1 248.8l-0.8 2.1M275.0 248.2l-1.3 3.7M292.1 254.4l-4.3 3.8M289.8 251.2l-2.4 2.7M290.5 260.6l-3.2 -2.2M292.3 256.3l-3.0 -4.1M286.6 262.5l-1.8 -4.1M289.2 262.5l-1.4 -3.4M278.1 262.5l0.9 -4.2M274.3 262.5l-1.0 -2.0M289.2 262.5l1.5 -3.6M263.8 261.5l2.1 -3.6M268.4 261.9l0.7 -2.4M273.4 262.5l-1.3 -2.6M271.4 262.3l0.3 -2.2M271.9 262.3l2.1 -3.9M257.2 259.0l2.1 -1.4M254.9 256.8l4.1 -3.7M255.0 251.0l4.5 3.1M256.2 248.1l2.4 2.1M230.5 238.2l2.4 3.0M228.2 238.4l-0.1 3.1M228.7 238.4l2.4 3.3M223.2 238.9l-0.5 4.4M235.7 237.7l1.8 4.9M241.1 236.4l-0.5 4.0M240.4 236.6l1.5 5.5M240.5 236.5l1.6 3.6M247.5 234.8l0.8 2.0M248.1 235.1l-0.5 4.7M248.6 235.4l-2.2 2.9M253.7 249.2l-3.7 0.5M254.2 244.0l-5.4 1.3M254.8 239.3l-5.5 -0.5M254.6 240.8l-2.1 -1.4M253.3 257.8l-2.2 -0.5M253.3 253.9l-3.8 -0.5M252.9 259.6l-1.1 -5.6M252.0 259.6l-2.3 -4.6M253.0 259.6l-0.2 -4.6M239.4 254.3l2.2 -4.7M244.3 259.3l3.0 -3.2M235.3 253.3l-1.3 -5.5M231.3 252.8l1.3 -1.9M227.7 252.4l-0.4 -4.5M230.3 252.7l2.6 -5.0M226.9 252.1l1.4 -3.8M224.7 249.9l5.5 -2.0M222.4 245.7l3.9 -1.5M222.5 246.4l4.9 0.8M222.2 244.9l3.7 0.3M297.6 185.0l1.7 3.5M251.6 185.0l-1.0 2.5M280.8 185.0l0.7 4.5M271.5 185.0l-1.5 2.3M288.7 185.0l-0.6 2.4M288.2 185.0l-1.4 4.2M289.0 185.0l-2.9 4.7M274.3 185.0l0.7 4.5M274.5 185.0l-0.6 3.4M270.3 185.0l-1.4 3.1M302.9 185.0l-1.9 4.3M272.7 185.0l1.3 4.4M267.6 185.0l-0.8 2.3M311.8 185.0l0.5 3.2M253.1 185.0l-0.4 2.5M309.6 185.0l0.7 2.2M299.9 185.0l-1.3 2.6M270.3 185.0l1.4 3.6M265.8 185.0l1.0 3.6M297.8 185.0l-0.4 2.1M303.1 185.0l1.2 3.1M253.3 185.0l-0.8 2.2M288.6 185.0l0.1 2.1M288.2 185.0l1.7 2.8M275.3 185.0l-1.8 2.9M316.5 190.3l-4.6 -3.4M315.8 193.5l-2.1 -1.3M317.2 186.3l-4.1 1.2M317.2 186.4l-3.6 0.8M314.6 199.7l-3.4 -2.7M303.4 208.1l-2.3 -4.5M309.1 203.9l-2.2 -4.6M312.8 201.2l-2.8 -3.0M308.6 204.3l-1.9 -4.4M307.9 204.8l-1.3 -5.0M302.4 209.3l-2.6 -0.1M302.0 209.9l-5.5 -2.0M300.4 212.4l-3.1 -2.4M297.5 220.5l-4.8 1.7M298.4 227.1l-3.9 3.5M297.9 223.7l-2.2 -0.8M297.2 218.1l-3.0 -0.6M296.0 234.9l-4.5 -1.4M296.3 234.2l-2.6 -1.0M297.5 231.5l-4.7 0.3M293.2 239.5l-1.0 -2.6M290.0 240.8l0.4 -2.0M273.5 240.8l-1.1 -3.3M273.7 240.9l-1.7 -5.7M274.8 241.0l3.1 -4.3M283.6 241.8l-0.8 -2.4M283.2 241.8l3.1 -4.7M268.1 237.9l1.4 -2.1M269.5 239.2l4.0 -2.3M265.0 226.8l3.7 -0.2M265.0 230.0l3.5 -0.2M265.0 227.7l4.7 -1.0M261.7 220.4l0.9 -2.4M262.8 221.7l1.1 -3.2M264.5 223.9l3.7 -0.5M251.8 207.5l1.4 -1.6M256.0 213.0l1.5 -2.9M254.0 210.4l3.8 -3.8M257.6 215.2l0.8 -2.3M252.5 208.3l2.7 -1.1M245.8 199.8l1.2 -2.0M248.6 203.3l4.7 -1.9M248.6 203.4l2.5 -2.8M244.6 192.0l5.0 -1.5M244.6 187.5l5.6 0.7M244.6 185.5l5.3 -2.2M244.6 185.1l2.6 1.0M165.6 264.2l0.7 3.1M173.0 263.1l2.3 4.1M173.6 263.1l0.7 5.4M175.2 263.2l-0.8 3.0M179.0 265.4l-3.4 4.6M183.1 267.7l-0.5 2.2M182.2 267.2l-0.6 3.3M185.4 269.2l-1.4 1.7M188.2 272.0l-2.7 2.3M187.9 278.1l-1.2 -1.7M187.4 278.7l-3.3 -2.1M188.1 277.9l-2.0 -1.0M187.8 278.2l-2.4 -0.4M185.9 280.4l-0.8 -1.9M177.9 289.2l-2.6 -2.8M180.4 286.7l-1.0 -2.2M176.5 290.6l-3.3 -2.2M167.7 293.9l1.4 -3.8M167.1 293.9l1.5 -5.4M162.9 288.9l3.4 -1.8M163.4 289.6l4.1 -0.6M162.1 287.6l2.1 -0.5M163.3 272.9l3.6 2.6M161.6 285.4l3.9 -0.1M164.3 265.5l2.6 0.5M161.9 283.3l5.0 0.6M163.6 270.2l2.7 1.8M161.5 286.3l2.7 1.2M164.0 267.1l5.1 -0.7M182.9 281.5l1.6 4.6M182.7 281.7l3.2 4.8M182.4 281.9l2.9 2.7M183.2 281.3l0.6 5.5M193.9 275.2l-0.3 3.8M200.3 277.7l-0.4 2.4M197.2 276.5l-1.1 3.7M199.4 277.3l-4.4 3.7M210.8 273.7l4.5 2.8M206.0 277.7l1.9 3.4M208.6 275.5l0.3 3.4M213.8 272.3l1.6 1.3M213.0 272.6l-0.2 4.9M219.0 270.7l-2.4 1.7M221.2 277.2l-4.6 3.2M219.2 271.2l-5.7 -1.4M221.8 288.6l-3.7 -1.1M221.8 289.3l-3.9 1.1M221.8 286.1l-4.5 1.0M221.8 287.6l-2.2 -1.4M223.4 293.6l-2.7 1.0M228.8 298.0l-5.0 2.7M228.1 297.4l-3.6 3.9M229.5 298.7l-4.8 1.2M232.9 303.2l-0.9 2.0M231.4 310.6l-2.8 -2.8M230.6 312.9l-3.3 -1.9M231.6 310.1l-4.7 -0.8M227.8 315.8l-0.7 -2.2M227.4 316.2l-3.8 -3.5M224.1 317.1l1.3 -3.6M220.6 316.6l-1.1 -2.2M222.1 316.8l-0.5 -2.9M213.3 316.2l0.4 -3.6M205.2 317.3l-3.0 -3.6M205.7 317.2l0.7 -4.4M208.7 316.8l-1.1 -3.2M203.4 317.5l-2.9 -3.7M196.2 318.4l0.4 -5.6M197.0 318.3l2.2 -4.8M194.6 318.6l-1.0 -5.9M192.4 318.8l4.4 -0.7M189.8 311.2l3.9 -2.1M192.4 318.9l5.2 -0.9M185.1 304.3l4.3 -1.0M186.0 305.5l4.6 -3.8M183.7 297.6l2.5 -2.5M184.5 301.8l3.1 1.3M185.8 295.1l1.2 2.8M184.1 296.4l2.2 2.3M188.5 291.1l3.3 -2.9M183.5 284.1l3.4 -0.1M188.0 290.4l2.4 -3.3M189.3 292.3l3.2 -0.5M229.2 274.5l1.9 3.5M228.9 274.6l3.6 2.1M229.8 274.1l0.4 3.1M234.1 271.7l1.9 4.4M241.6 269.0l3.5 3.5M237.3 270.1l-0.8 4.9M242.4 280.5l-4.7 2.0M242.4 275.5l-4.5 -0.6M242.4 270.4l-5.9 -0.1M242.4 272.0l-5.9 0.8M242.4 281.3l-4.5 1.3M242.4 282.8l-3.2 -0.4M242.4 283.9l-4.1 -2.2M236.6 290.9l2.7 -4.9M240.9 290.9l-2.5 -4.7M232.3 286.6l0.7 -2.2M229.6 283.9l2.2 -1.2M232.7 287.0l1.8 -0.8M229.0 283.1l5.5 -0.0M227.7 279.9l2.2 -3.1M256.7 267.8l0.1 2.2M260.4 267.5l2.4 4.0M257.1 267.8l1.4 4.6M257.9 267.7l0.8 4.2M253.9 268.1l1.0 2.9M258.9 277.8l-2.8 -1.9M260.5 271.7l-2.6 0.9M258.7 278.7l-3.4 -3.7M259.8 274.3l-2.2 0.3M258.2 279.6l-3.2 -3.1M251.6 288.9l-3.0 -0.9M257.0 281.4l-2.6 -0.1M255.0 284.2l-3.3 -1.6M247.0 285.2l3.0 -1.3M248.9 287.1l0.5 -2.4M245.9 275.1l4.5 -3.2M245.8 273.6l2.9 0.4M245.6 271.5l4.5 -1.9M246.6 282.5l5.4 2.4M245.5 270.0l3.4 -2.4M268.7 271.4l3.4 4.5M267.6 271.5l-0.7 2.0M268.5 271.4l0.7 2.2M266.3 271.7l-0.1 3.7M272.8 270.9l0.2 2.4M278.4 270.4l-1.8 3.3M280.8 270.7l1.0 5.2M282.3 270.9l2.3 4.6M284.2 271.1l-1.6 3.8M300.3 279.6l-1.4 4.6M291.8 273.4l-1.4 3.7M295.8 276.3l-1.8 1.5M294.2 275.2l-0.4 2.2M309.7 287.5l-5.0 2.1M304.6 283.1l-1.8 5.7M307.7 285.8l-2.0 5.4M300.9 280.0l-0.5 2.5M317.8 295.6l-3.1 3.2M311.4 289.1l-1.6 4.3M311.5 289.3l-3.6 2.5M317.7 295.5l-1.8 5.0M322.1 300.3l-1.9 1.7M319.8 297.7l-4.8 2.6M326.1 305.0l-3.9 0.9M326.4 305.2l-5.0 1.8M328.8 309.1l-1.8 2.8M331.8 315.0l-3.9 -0.5M329.2 309.9l-3.7 0.1M332.8 317.2l-5.0 0.0M340.5 324.9l-2.5 1.9M333.5 318.0l-4.6 1.2M337.1 321.5l-2.0 1.7M341.3 326.0l-2.6 2.8M342.2 328.9l-5.3 0.1M336.9 341.5l-3.1 -2.3M343.3 334.1l-3.6 -3.7M340.4 337.4l-2.0 -1.6M343.2 334.2l-2.4 -0.5M334.6 348.0l-2.1 -1.5M334.1 350.3l-5.2 -1.5M335.3 344.8l-2.5 -1.8M334.1 350.0l-4.3 -1.7M332.9 355.4l-2.7 -0.6M330.8 361.8l-5.3 -2.4M328.3 361.6l1.3 -1.7M327.1 360.8l1.3 -5.6M328.7 361.9l0.0 -2.1M312.6 349.1l1.7 -5.2M322.1 357.5l1.8 -3.9M314.9 351.1l4.8 -2.9M318.9 354.7l2.0 -3.9M313.2 349.6l2.8 -1.2M302.1 344.2l0.8 -5.5M298.8 343.1l0.2 -4.3M302.5 344.3l-0.4 -3.2M309.8 346.8l0.1 -4.4M298.1 342.4l4.0 -3.2M303.9 333.5l2.0 2.4M305.6 332.6l0.7 5.3M306.0 332.3l0.0 4.4M308.8 328.0l4.1 1.4M307.8 329.7l4.2 1.0M306.0 322.9l3.9 -3.8M308.8 324.6l0.8 -2.0M300.1 318.6l3.7 -4.0M299.4 318.0l3.0 -3.2M298.1 317.0l2.9 -3.1M293.6 312.9l1.6 -1.9M288.4 307.7l3.0 -5.0M290.9 310.2l2.7 -3.0M285.6 306.3l-1.3 -5.0M285.1 306.2l-0.3 -3.1M285.4 306.3l0.6 -2.2M275.0 303.6l1.6 -4.3M270.1 302.4l1.5 -3.6M273.6 303.3l1.8 -3.4M265.2 299.7l4.6 -1.7M262.2 293.6l4.1 -1.8M263.0 295.3l2.6 -1.8M262.7 284.1l4.7 1.6M262.3 289.4l4.7 3.5M262.7 282.8l5.9 1.2M262.6 285.2l2.0 -1.2M262.9 280.7l4.8 1.0M263.1 276.6l3.5 1.3M262.9 280.5l4.5 0.5M467.1 189.0l-3.7 2.0M467.1 189.0l-4.8 0.4M462.2 203.3l-3.9 0.1M464.5 197.5l-3.4 0.1M462.6 202.3l-2.2 -1.6M466.2 193.2l-2.3 -3.4M461.8 205.5l-4.8 2.5M459.6 223.4l-5.6 -0.3M460.4 216.6l-3.7 1.1M461.1 210.9l-3.2 -2.0M461.7 206.0l-4.1 -0.4M460.6 214.9l-5.0 -1.2M461.2 210.2l-5.6 -1.4M460.2 228.7l-4.0 -1.2M459.6 224.7l-4.5 0.7M460.2 229.0l-2.4 1.2M460.6 231.6l-3.7 0.1M460.2 228.7l-4.4 0.8M461.5 238.0l-4.7 2.3M459.6 261.4l-4.2 0.3M461.4 246.8l-4.8 -0.2M460.3 255.5l-2.6 -1.6M461.3 247.0l-5.5 -0.3M461.0 249.7l-4.3 -0.6M460.6 252.7l-3.3 -2.6M460.1 256.7l-1.8 -1.5M459.4 262.2l-1.6 -1.6M457.4 266.8l-2.1 -0.0M455.7 270.7l-5.3 0.9M458.2 264.8l-2.0 0.3M457.1 267.5l-2.2 -3.3M454.6 273.4l-4.7 -2.7M451.9 298.1l-4.5 1.4M451.9 287.2l-3.5 1.8M451.9 298.4l-3.7 1.4M451.9 289.6l-5.0 1.4M451.9 291.5l-2.3 0.7M451.9 283.4l-3.9 -0.9M451.9 284.2l-4.7 -0.5M444.3 309.4l-5.3 -2.7M441.8 312.5l-3.0 -2.4M450.1 302.1l-1.5 -1.8M450.9 301.2l-2.1 -0.4M446.4 306.7l-2.6 -1.1M430.1 322.2l-3.4 -1.7M431.5 321.1l-3.1 -5.1M435.0 318.2l-1.8 -3.7M429.1 323.1l-4.3 -2.8M429.9 322.4l-2.2 -1.0M434.1 318.9l-1.6 -2.2M422.3 328.8l-4.0 -4.1M414.2 335.5l-3.9 -4.2M414.9 334.9l-2.9 -2.7M424.7 326.8l-0.9 -4.6M416.1 333.9l-2.0 -2.6M421.2 329.7l-1.3 -3.3M411.3 338.0l-3.6 -1.5M409.9 341.5l-4.9 -0.4M407.3 348.0l-2.6 -1.4M407.0 348.7l-4.5 -1.3M403.5 357.7l-4.2 0.4M406.4 350.3l-3.0 -0.4M401.8 361.9l-3.1 -2.4M409.8 341.8l-4.5 0.4M409.2 343.4l-2.5 0.5M396.6 366.9l-0.8 -1.9M392.9 369.9l-0.8 -2.0M400.4 363.9l-1.0 -2.8M378.9 361.6l2.3 -1.9M378.4 361.1l3.5 -2.7M381.9 365.3l3.2 -3.0M371.1 348.4l4.1 -1.2M372.8 351.9l4.9 -2.2M369.3 344.7l5.9 -0.4M370.1 346.4l4.4 -1.8M374.0 354.3l2.3 -0.6M367.1 339.1l4.3 -1.2M365.3 333.7l3.0 -2.2M366.9 338.3l4.7 0.7M366.8 338.1l3.0 -1.2M366.2 336.4l4.5 -0.1M367.2 314.1l4.5 2.7M368.3 310.5l3.7 0.8M366.6 316.2l2.5 2.0M365.4 320.3l4.0 1.3M365.2 321.3l2.0 0.0M365.7 319.3l5.7 -0.9M366.1 298.5l5.8 0.9M367.7 306.5l2.0 0.5M368.2 309.1l3.0 1.0M366.6 301.4l5.2 1.0M364.9 295.5l2.3 -3.3M363.9 293.5l4.0 -0.3M364.4 294.4l2.9 -3.6M359.5 283.3l2.2 -0.5M357.8 278.3l4.4 -2.0M356.0 273.0l4.7 -1.2M356.3 273.9l2.3 -1.5M358.0 278.8l4.3 1.0M352.2 261.7l2.1 0.5M353.3 264.9l2.8 -0.0M352.5 262.5l5.2 -1.4M354.4 268.1l3.6 -1.4M353.9 266.7l3.2 -2.9M348.7 254.9l0.5 -2.4M346.6 252.8l3.1 -3.9M343.7 249.9l3.7 -2.5M338.6 247.8l0.8 -5.5M330.2 245.0l2.3 -1.9M332.6 245.8l1.5 -2.2M340.6 248.4l0.6 -3.5M337.9 247.5l-0.3 -3.4M324.8 241.2l2.2 -1.0M325.1 241.5l3.1 -3.7M320.5 236.8l4.8 -2.8M313.9 230.2l5.5 -1.5M317.2 233.5l1.2 -4.2M317.5 233.8l2.7 -2.0M312.7 228.9l3.8 -3.3M311.6 223.6l3.9 0.8M311.1 221.0l2.6 -0.0M312.1 226.0l4.3 -1.3M315.0 209.0l3.6 1.2M311.7 213.9l5.3 2.3M311.3 214.5l2.9 3.0M330.6 204.0l1.1 2.0M327.1 205.1l0.3 4.0M326.3 205.3l1.8 1.6M318.1 207.8l2.0 2.5M319.9 207.3l1.9 1.6M323.8 206.1l3.3 3.8M331.7 202.5l4.5 -1.9M331.8 201.9l3.9 -0.6M332.6 193.7l4.0 0.5M332.1 198.9l1.9 1.0M332.9 188.7l4.7 -2.4M332.9 188.4l3.8 -1.7M342.9 185.0l-2.9 5.0M467.1 185.0l-1.2 4.0M413.6 185.0l1.5 3.6M419.1 185.0l-0.8 3.7M338.5 185.0l1.4 2.8M435.3 185.0l1.0 3.8M437.8 185.0l1.0 4.0M385.6 185.0l1.0 1.7M337.8 185.0l-2.6 5.3M405.9 185.0l-0.3 5.8M424.4 185.0l0.2 2.4M414.9 185.0l-0.7 3.6M379.0 185.0l1.6 4.3M398.6 185.0l-0.1 3.7M340.3 185.0l-0.8 2.9M355.2 185.0l-2.2 3.2M414.7 185.0l-1.6 4.7M462.9 185.0l0.4 3.5M434.2 185.0l0.1 2.1M369.3 185.0l-1.2 4.1M448.5 185.0l-0.9 3.9M343.5 185.0l-2.3 4.0M415.5 185.0l-0.1 4.0M388.2 185.0l1.0 2.5M439.5 185.0l2.1 3.5M415.4 185.0l-1.0 5.2M357.1 185.0l2.2 5.4M401.1 185.0l1.5 3.5M368.7 185.0l1.1 2.5M338.4 185.0l-0.9 4.5M366.7 185.0l0.5 5.8M394.1 185.0l-1.0 5.6M395.4 185.0l-1.4 4.8M374.3 185.0l-0.6 2.2M433.3 185.0l2.0 3.9M432.8 185.0l-0.9 2.5M416.4 185.0l2.2 4.0M381.9 185.0l2.2 4.4M338.1 185.0l-1.5 3.3M417.4 185.0l1.4 2.6M445.2 185.0l-1.3 5.2M360.7 185.0l2.8 4.2M356.0 185.0l-1.7 2.8M337.7 185.0l-0.7 2.5M435.2 185.0l1.5 2.7M447.5 185.0l-2.8 5.2M452.6 331.3l-0.1 2.3M453.4 331.1l-0.3 5.3M451.9 331.5l1.7 5.7M463.8 330.2l-1.5 4.3M465.9 330.2l1.6 5.5M470.6 330.2l1.0 5.4M457.4 330.2l-0.6 4.4M471.6 330.2l-1.1 4.1M476.0 336.0l-2.5 1.0M474.4 333.5l-1.9 2.2M474.0 333.0l-4.3 2.5M475.6 341.0l-1.5 -1.6M473.4 345.4l-3.7 -3.8M476.9 338.4l-2.9 -1.3M469.2 348.7l-3.0 -4.4M472.1 347.9l-2.7 -2.7M471.9 348.0l-0.5 -4.4M456.5 349.1l0.7 -2.2M456.7 349.1l-0.3 -3.2M460.4 350.1l0.4 -3.9M448.2 343.5l2.7 -3.9M448.1 343.3l2.8 -1.2M450.6 346.4l4.0 -1.8M446.6 334.3l3.3 2.5M446.8 332.9l5.2 -0.1M551.8 193.5l1.9 2.8M548.9 194.2l-0.1 2.5M547.3 194.5l-0.6 3.9M559.0 192.6l-1.0 5.5M559.7 192.5l-0.7 4.9M559.8 234.4l2.3 -0.9M555.8 228.4l2.1 -1.0M558.7 232.7l3.7 -2.4M559.5 234.0l5.9 -0.8M552.7 223.5l4.9 -1.9M550.2 219.6l2.8 -5.3M554.2 225.9l2.9 -0.5M549.4 218.3l2.4 -1.6M545.4 209.2l4.7 -1.4M545.4 209.2l3.6 -4.4M545.1 208.5l3.1 -0.8M545.0 198.3l3.1 -0.7M545.0 196.2l4.3 2.8M545.0 207.0l4.3 1.3M545.0 195.6l4.7 -1.3" stroke="#000" stroke-width="1" fill="none"/>
<path d="M588 295h0M585 300h0M583 303h0M576 306h0M758 308h0M583 310h0M1007 312h0M1015 319h0M577 321h0M617 323h0M558 325h0M881 325h0M554 329h0M578 332h0M580 329h0M585 332h0M595 330h0M557 333h0M559 333h0M739 334h0M240 339h0M555 343h0M884 342h0M1004 341h0M564 344h0M547 351h0M563 351h0M563 353h0M567 352h0M554 354h0M556 353h0M558 354h0M565 354h0M569 353h0M580 354h0M581 356h0M598 354h0M248 356h0M538 358h0M540 358h0M546 358h0M552 358h0M557 358h0M561 357h0M566 358h0M567 358h0M579 359h0M587 357h0M542 360h0M546 360h0M555 360h0M559 362h0M626 360h0M679 361h0M535 364h0M539 363h0M555 364h0M579 365h0M664 364h0M684 362h0M892 363h0M57 366h0M173 365h0M530 365h0M543 366h0M557 365h0M557 367h0M580 368h0M627 368h0M530 370h0M542 370h0M548 368h0M559 369h0M562 369h0M580 369h0M585 369h0M222 373h0M532 371h0M533 374h0M538 371h0M539 373h0M547 373h0M557 372h0M660 374h0M666 374h0M850 373h0M542 375h0M544 376h0M551 376h0M553 374h0M563 377h0M566 374h0M639 375h0M664 375h0M705 376h0M536 379h0M538 378h0M541 379h0M547 378h0M553 378h0M562 379h0M589 380h0M624 377h0M626 380h0M683 379h0M505 380h0M555 380h0M559 381h0M561 382h0M604 381h0M606 381h0M611 380h0M624 383h0M634 383h0M657 382h0M661 383h0M505 386h0M554 386h0M596 384h0M653 384h0M672 384h0M688 383h0M768 383h0M500 386h0M558 388h0M577 386h0M580 388h0M598 387h0M661 387h0M501 390h0M504 391h0M506 389h0M545 391h0M562 389h0M612 390h0M616 389h0M637 390h0M638 392h0M663 390h0M668 390h0M502 393h0M540 394h0M547 392h0M552 394h0M578 394h0M580 392h0M590 395h0M598 395h0M599 395h0M607 393h0M610 393h0M688 392h0M539 398h0M542 397h0M551 397h0M577 396h0M581 396h0M582 397h0M586 398h0M589 397h0M593 396h0M594 398h0M598 396h0M601 396h0M608 398h0M226 399h0M247 400h0M494 399h0M499 400h0M513 400h0M541 400h0M545 399h0M562 400h0M565 400h0M568 398h0M570 401h0M575 399h0M577 401h0M580 399h0M583 400h0M584 399h0M588 400h0M593 400h0M594 400h0M597 400h0M607 399h0M617 399h0M656 400h0M870 400h0M238 404h0M494 403h0M515 402h0M544 402h0M546 402h0M552 404h0M556 403h0M562 402h0M564 403h0M566 402h0M570 403h0M575 403h0M576 404h0M580 403h0M581 402h0M584 404h0M589 403h0M593 402h0M596 402h0M598 404h0M600 404h0M615 403h0M800 403h0M880 403h0M166 406h0M298 405h0M346 405h0M494 405h0M504 406h0M533 406h0M537 405h0M540 407h0M542 405h0M548 406h0M550 406h0M553 405h0M556 407h0M559 406h0M563 406h0M563 406h0M568 405h0M570 404h0M574 405h0M578 405h0M579 404h0M582 406h0M585 406h0M588 407h0M592 405h0M595 406h0M598 407h0M614 405h0M634 406h0M814 405h0M862 406h0M868 404h0M325 410h0M331 407h0M490 408h0M492 409h0M518 407h0M518 409h0M536 407h0M536 409h0M541 409h0M544 407h0M547 409h0M549 410h0M553 408h0M554 408h0M559 408h0M563 407h0M565 408h0M568 409h0M571 408h0M573 410h0M575 409h0M579 409h0M582 408h0M584 408h0M587 408h0M591 408h0M595 409h0M596 407h0M600 407h0M622 408h0M629 409h0M638 409h0M216 412h0M498 412h0M507 412h0M511 413h0M518 412h0M528 410h0M532 413h0M536 412h0M536 411h0M539 411h0M545 412h0M547 412h0M549 413h0M552 410h0M556 412h0M559 412h0M562 412h0M566 413h0M566 410h0M571 411h0M573 412h0M576 411h0M579 410h0M584 411h0M585 411h0M588 411h0M590 412h0M596 412h0M597 412h0M600 412h0M606 411h0M636 411h0M671 413h0M281 415h0M348 414h0M505 414h0M508 413h0M510 414h0M513 414h0M516 415h0M527 415h0M530 415h0M535 415h0M538 416h0M540 414h0M543 415h0M546 415h0M550 415h0M552 416h0M554 416h0M558 413h0M561 413h0M565 415h0M568 415h0M570 415h0M574 413h0M576 414h0M579 414h0M583 415h0M585 414h0M589 414h0M591 414h0M593 414h0M599 415h0M600 416h0M624 415h0M670 414h0M682 415h0M216 419h0M235 419h0M255 417h0M276 418h0M517 417h0M527 417h0M527 418h0M532 417h0M534 418h0M537 416h0M541 418h0M544 418h0M547 416h0M548 417h0M551 417h0M556 419h0M557 418h0M561 418h0M565 416h0M567 418h0M570 418h0M574 418h0M578 419h0M578 416h0M581 417h0M587 418h0M588 418h0M592 416h0M594 418h0M597 418h0M600 417h0M751 417h0M769 419h0M803 418h0M839 419h0M212 422h0M357 420h0M520 419h0M522 422h0M526 421h0M530 419h0M531 419h0M536 419h0M539 422h0M541 421h0M543 420h0M547 421h0M551 419h0M552 419h0M556 421h0M560 422h0M560 420h0M565 421h0M566 421h0M570 420h0M572 420h0M576 420h0M579 421h0M582 420h0M586 420h0M587 421h0M591 420h0M596 420h0M597 421h0M601 419h0M617 421h0M650 420h0M682 421h0M822 420h0M838 422h0M899 420h0M231 422h0M239 423h0M510 422h0M516 425h0M519 423h0M525 423h0M528 423h0M533 423h0M533 423h0M538 424h0M542 424h0M545 425h0M547 423h0M551 422h0M554 424h0M556 423h0M558 424h0M560 423h0M564 422h0M567 425h0M569 425h0M572 423h0M577 424h0M581 423h0M584 425h0M586 422h0M589 424h0M591 425h0M595 422h0M599 423h0M600 424h0M606 424h0M644 425h0M762 424h0M798 423h0M827 423h0M261 427h0M508 427h0M512 427h0M518 428h0M520 428h0M524 427h0M528 426h0M531 428h0M534 427h0M537 426h0M541 425h0M544 427h0M545 428h0M550 426h0M551 425h0M555 427h0M559 426h0M562 428h0M563 428h0M567 426h0M572 426h0M573 426h0M578 426h0M578 427h0M583 427h0M586 428h0M589 427h0M591 427h0M596 428h0M598 426h0M600 428h0M603 427h0M608 427h0M610 428h0M698 428h0M720 428h0M769 427h0M796 425h0M822 427h0M894 425h0M898 426h0M170 430h0M362 429h0M509 428h0M517 430h0M519 428h0M524 430h0M527 430h0M530 431h0M534 429h0M537 430h0M540 428h0M543 429h0M546 430h0M548 428h0M551 431h0M555 429h0M558 429h0M560 430h0M564 430h0M568 430h0M571 431h0M573 429h0M575 429h0M581 430h0M582 429h0M585 431h0M590 431h0M593 430h0M596 430h0M598 428h0M600 430h0M613 431h0M655 430h0M702 430h0M764 431h0M182 432h0M212 432h0M512 432h0M517 433h0M519 434h0M524 432h0M526 432h0M528 434h0M532 432h0M534 433h0M538 434h0M542 432h0M543 432h0M547 433h0M549 434h0M554 431h0M556 433h0M558 432h0M560 434h0M565 431h0M567 433h0M570 432h0M575 432h0M577 432h0M580 434h0M583 432h0M586 434h0M589 432h0M591 432h0M595 434h0M598 433h0M599 433h0M608 431h0M626 434h0M687 433h0M704 434h0M734 432h0M812 432h0M813 432h0M842 432h0M223 437h0M280 436h0M290 436h0M292 436h0M310 437h0M312 436h0M512 434h0M520 434h0M526 435h0M530 436h0M531 435h0M533 436h0M537 434h0M542 436h0M544 435h0M547 436h0M549 436h0M552 435h0M555 435h0M559 436h0M561 435h0M564 434h0M568 434h0M571 436h0M573 435h0M577 435h0M578 436h0M583 436h0M586 435h0M587 434h0M592 436h0M595 435h0M597 435h0M602 436h0M605 434h0M647 434h0M767 434h0M783 436h0M837 436h0M868 436h0M169 437h0M206 437h0M288 438h0M291 438h0M305 438h0M312 437h0M321 438h0M335 438h0M515 438h0M528 440h0M532 439h0M536 438h0M539 439h0M541 438h0M543 440h0M546 438h0M549 440h0M553 438h0M557 438h0M558 439h0M562 439h0M565 440h0M568 438h0M572 437h0M574 439h0M576 439h0M581 440h0M584 439h0M586 440h0M588 438h0M592 440h0M594 439h0M596 438h0M600 439h0M625 437h0M634 438h0M668 439h0M737 439h0M769 440h0M194 442h0M218 440h0M235 443h0M264 441h0M270 441h0M302 442h0M307 441h0M309 441h0M325 441h0M518 442h0M520 442h0M524 443h0M529 440h0M530 440h0M536 442h0M538 442h0M540 441h0M544 441h0M546 440h0M549 441h0M556 440h0M559 441h0M561 440h0M563 442h0M567 442h0M569 441h0M574 441h0M577 441h0M580 442h0M584 443h0M584 442h0M587 440h0M592 442h0M594 442h0M633 442h0M701 442h0M752 440h0M775 441h0M859 441h0M180 444h0M194 444h0M208 446h0M257 444h0M314 444h0M316 445h0M322 443h0M522 445h0M526 444h0M530 444h0M531 444h0M534 446h0M538 443h0M544 446h0M546 446h0M549 445h0M561 444h0M563 444h0M568 444h0M571 444h0M575 445h0M577 445h0M581 445h0M582 444h0M586 445h0M589 445h0M591 445h0M596 444h0M662 445h0M691 443h0M694 443h0M696 445h0M701 444h0M716 445h0M736 444h0M789 446h0M884 446h0M888 445h0M895 444h0M197 449h0M198 449h0M255 447h0M277 448h0M282 448h0M289 447h0M300 449h0M497 448h0M499 448h0M502 448h0M512 446h0M513 448h0M517 447h0M529 447h0M531 446h0M535 448h0M550 447h0M552 448h0M565 447h0M566 448h0M570 448h0M574 448h0M576 448h0M580 446h0M582 447h0M585 447h0M588 447h0M591 447h0M594 448h0M635 446h0M642 447h0M678 448h0M690 448h0M696 447h0M727 449h0M736 449h0M821 447h0M831 447h0M840 447h0M843 447h0M873 447h0M885 447h0M890 447h0M892 446h0M916 448h0M173 450h0M203 450h0M229 451h0M230 450h0M261 451h0M289 450h0M295 450h0M298 452h0M307 450h0M494 452h0M497 452h0M506 450h0M506 450h0M513 449h0M515 450h0M525 449h0M542 451h0M550 452h0M553 450h0M556 451h0M569 451h0M571 452h0M573 452h0M577 450h0M579 450h0M581 450h0M586 449h0M588 450h0M592 449h0M690 451h0M694 451h0M702 451h0M731 452h0M736 450h0M738 451h0M890 450h0M272 455h0M280 454h0M296 453h0M303 452h0M314 455h0M493 452h0M495 455h0M507 454h0M513 453h0M523 454h0M542 452h0M543 455h0M550 453h0M553 454h0M557 452h0M558 454h0M561 453h0M573 453h0M577 454h0M581 454h0M583 454h0M586 454h0M588 454h0M592 454h0M672 454h0M689 453h0M703 453h0M713 452h0M738 452h0M848 455h0M852 452h0M879 454h0M262 456h0M285 457h0M305 455h0M305 457h0M311 456h0M311 456h0M497 457h0M517 457h0M556 458h0M558 456h0M560 457h0M564 457h0M574 457h0M581 456h0M581 456h0M584 455h0M590 457h0M590 456h0M594 456h0M604 458h0M611 458h0M615 458h0M654 456h0M700 455h0M701 456h0M717 456h0M732 455h0M218 460h0M248 459h0M282 461h0M296 460h0M300 461h0M498 458h0M510 458h0M559 459h0M561 460h0M572 459h0M581 461h0M603 460h0M605 459h0M614 459h0M624 461h0M627 461h0M631 461h0M633 460h0M642 460h0M645 459h0M653 458h0M687 459h0M692 461h0M706 461h0M710 460h0M712 460h0M724 459h0M726 459h0M760 460h0M768 459h0M810 459h0M813 460h0M827 460h0M846 460h0M869 459h0M915 458h0M190 462h0M209 464h0M234 462h0M236 462h0M298 462h0M493 461h0M494 462h0M498 464h0M500 462h0M503 462h0M512 462h0M596 464h0M603 463h0M606 461h0M624 462h0M632 464h0M633 462h0M636 461h0M641 462h0M647 464h0M648 464h0M673 462h0M714 461h0M720 462h0M751 462h0M816 462h0M868 463h0M871 463h0M875 464h0M912 461h0M916 461h0M253 466h0M284 466h0M290 465h0M290 464h0M305 467h0M491 466h0M497 466h0M502 465h0M506 466h0M541 465h0M581 465h0M583 466h0M593 466h0M596 466h0M597 466h0M599 464h0M610 465h0M614 465h0M616 464h0M620 465h0M627 465h0M632 467h0M634 465h0M640 464h0M648 467h0M653 464h0M702 467h0M710 466h0M715 465h0M739 464h0M746 464h0M870 466h0M910 466h0M913 465h0M270 467h0M492 470h0M553 470h0M580 467h0M582 467h0M596 468h0M598 469h0M602 468h0M614 470h0M624 469h0M626 468h0M631 468h0M636 469h0M647 468h0M649 469h0M650 469h0M683 467h0M688 470h0M690 469h0M694 467h0M703 469h0M725 468h0M726 468h0M731 469h0M736 467h0M747 470h0M802 469h0M833 468h0M875 470h0M876 468h0M234 473h0M288 470h0M493 471h0M498 471h0M502 470h0M509 472h0M513 470h0M541 472h0M598 472h0M600 471h0M602 473h0M607 473h0M610 473h0M616 472h0M631 472h0M646 472h0M654 473h0M658 472h0M675 471h0M687 473h0M691 471h0M694 471h0M704 471h0M719 473h0M723 472h0M726 471h0M750 471h0M807 471h0M872 472h0M872 470h0M880 472h0M907 472h0M270 475h0M276 473h0M294 475h0M296 474h0M301 473h0M500 474h0M524 476h0M524 473h0M530 476h0M530 476h0M542 474h0M620 474h0M621 474h0M624 476h0M632 475h0M633 473h0M637 476h0M647 474h0M657 474h0M669 474h0M680 474h0M682 474h0M684 473h0M698 474h0M709 475h0M721 475h0M802 476h0M875 475h0M876 473h0M881 476h0M903 474h0M906 474h0M210 478h0M226 476h0M240 478h0M256 476h0M272 478h0M294 479h0M298 476h0M499 476h0M515 478h0M524 478h0M532 478h0M539 479h0M539 477h0M547 476h0M589 478h0M625 478h0M632 477h0M635 477h0M637 478h0M639 479h0M650 477h0M654 479h0M666 478h0M672 478h0M674 477h0M693 478h0M700 478h0M708 477h0M714 477h0M834 479h0M875 477h0M879 479h0M891 477h0M903 479h0M908 477h0M220 480h0M231 480h0M265 479h0M291 480h0M295 482h0M521 480h0M618 480h0M624 480h0M626 481h0M633 482h0M646 482h0M648 479h0M651 482h0M655 480h0M657 480h0M664 481h0M668 480h0M668 481h0M683 481h0M693 480h0M707 481h0M716 481h0M719 481h0M838 480h0M852 480h0M890 481h0M188 482h0M236 484h0M249 484h0M500 484h0M531 483h0M627 484h0M635 484h0M642 485h0M645 482h0M668 483h0M671 483h0M684 483h0M691 483h0M704 482h0M721 484h0M722 483h0M728 485h0M881 485h0M884 482h0M890 484h0M894 485h0M898 484h0M220 486h0M271 488h0M283 487h0M617 488h0M620 486h0M633 486h0M641 488h0M652 488h0M658 488h0M684 487h0M703 485h0M706 488h0M710 486h0M728 488h0M804 486h0M882 485h0M885 486h0M285 488h0M610 490h0M617 489h0M624 490h0M628 490h0M636 489h0M641 490h0M642 488h0M644 491h0M657 489h0M661 489h0M662 491h0M666 490h0M673 490h0M686 490h0M713 488h0M719 489h0M721 489h0M729 488h0M751 491h0M835 490h0M886 488h0M216 492h0M219 494h0M229 492h0M262 494h0M275 493h0M490 492h0M526 493h0M528 493h0M604 492h0M608 493h0M610 493h0M617 492h0M626 492h0M642 493h0M646 493h0M657 492h0M662 491h0M684 493h0M704 493h0M707 491h0M712 491h0M718 494h0M734 493h0M748 492h0M751 493h0M760 493h0M763 493h0M767 493h0M770 493h0M772 494h0M790 494h0M794 493h0M795 492h0M801 494h0M852 494h0M224 496h0M259 494h0M566 497h0M604 496h0M607 496h0M610 496h0M613 497h0M616 495h0M619 496h0M640 495h0M645 495h0M655 494h0M661 495h0M666 496h0M694 495h0M706 496h0M708 495h0M712 495h0M717 496h0M723 494h0M727 494h0M734 495h0M738 497h0M743 497h0M761 495h0M778 497h0M781 497h0M785 496h0M848 495h0M853 494h0M857 495h0M230 499h0M242 498h0M607 500h0M611 498h0M616 499h0M618 500h0M646 500h0M648 498h0M652 497h0M667 500h0M670 500h0M674 499h0M691 498h0M702 498h0M705 498h0M733 497h0M734 500h0M740 498h0M751 500h0M772 498h0M792 498h0M797 498h0M838 497h0M226 502h0M604 500h0M615 500h0M620 500h0M622 502h0M633 503h0M639 500h0M686 500h0M693 501h0M732 500h0M751 502h0M758 503h0M765 503h0M772 502h0M774 502h0M784 502h0M787 502h0M788 501h0M796 502h0M799 502h0M811 501h0M225 504h0M232 503h0M241 506h0M602 504h0M606 506h0M609 503h0M621 504h0M624 506h0M627 504h0M630 506h0M632 506h0M712 504h0M739 505h0M743 505h0M746 503h0M752 505h0M758 506h0M774 504h0M777 506h0M784 505h0M787 504h0M789 503h0M798 503h0M846 505h0M219 508h0M223 507h0M234 508h0M495 508h0M599 506h0M601 507h0M604 507h0M606 507h0M620 507h0M621 508h0M627 507h0M639 507h0M647 507h0M653 507h0M655 508h0M727 508h0M735 508h0M742 507h0M758 507h0M759 508h0M762 506h0M766 508h0M773 509h0M221 510h0M229 509h0M233 510h0M242 510h0M606 510h0M732 509h0M735 509h0M745 511h0M753 512h0M757 510h0M759 510h0M764 509h0M769 510h0M782 511h0M784 512h0M788 511h0M796 510h0M798 509h0M813 511h0M856 511h0M214 513h0M236 513h0M240 513h0M605 514h0M608 514h0M613 513h0M636 513h0M733 514h0M746 512h0M752 513h0M767 514h0M779 514h0M786 513h0M788 514h0M797 515h0M803 514h0M288 517h0M491 516h0M588 517h0M599 517h0M602 515h0M611 516h0M615 517h0M728 518h0M732 515h0M734 517h0M743 515h0M744 518h0M748 516h0M780 515h0M790 516h0M796 516h0M798 515h0M802 518h0M806 516h0M808 516h0M810 517h0M814 516h0M816 516h0M818 517h0M822 515h0M826 516h0M855 517h0M218 519h0M279 518h0M285 520h0M288 519h0M575 520h0M600 520h0M610 519h0M612 521h0M730 519h0M732 519h0M736 520h0M751 518h0M762 520h0M776 519h0M785 521h0M794 519h0M797 519h0M799 519h0M803 518h0M804 519h0M808 519h0M811 521h0M812 520h0M816 520h0M821 518h0M824 520h0M826 520h0M236 522h0M266 524h0M296 521h0M301 522h0M484 522h0M495 522h0M617 521h0M732 522h0M735 521h0M747 523h0M752 523h0M759 523h0M778 522h0M782 521h0M786 523h0M790 521h0M792 522h0M796 521h0M800 522h0M800 523h0M804 521h0M807 524h0M811 523h0M814 522h0M816 524h0M819 521h0M827 523h0M242 526h0M261 526h0M270 527h0M298 526h0M300 524h0M302 524h0M490 525h0M504 527h0M562 526h0M596 526h0M745 526h0M778 525h0M779 525h0M790 526h0M794 526h0M796 525h0M800 525h0M800 525h0M803 525h0M808 524h0M811 525h0M814 525h0M237 530h0M259 530h0M263 529h0M267 528h0M270 527h0M317 528h0M530 529h0M785 528h0M792 529h0M796 528h0M798 527h0M800 527h0M806 530h0M808 530h0M809 527h0M814 530h0M824 528h0M824 530h0M249 531h0M257 532h0M259 531h0M261 531h0M266 531h0M299 533h0M618 532h0M623 532h0M646 531h0M751 533h0M784 531h0M794 531h0M795 530h0M799 531h0M802 530h0M804 531h0M809 532h0M812 532h0M815 532h0M816 532h0M856 532h0M859 532h0M260 535h0M266 535h0M505 534h0M511 535h0M521 533h0M547 533h0M552 534h0M615 533h0M624 534h0M650 534h0M653 534h0M783 533h0M788 534h0M797 535h0M798 534h0M801 534h0M804 533h0M808 534h0M810 533h0M815 533h0M816 534h0M820 536h0M858 533h0M256 538h0M258 538h0M262 537h0M274 538h0M474 537h0M477 538h0M481 539h0M484 538h0M487 538h0M490 538h0M499 539h0M503 538h0M506 538h0M508 537h0M510 539h0M516 539h0M526 537h0M538 538h0M563 538h0M616 537h0M625 538h0M647 537h0M652 539h0M657 537h0M791 539h0M795 537h0M799 536h0M802 538h0M804 536h0M807 537h0M811 538h0M813 536h0M815 537h0M820 538h0M262 540h0M264 540h0M269 539h0M274 540h0M278 540h0M278 542h0M469 540h0M471 540h0M474 541h0M478 540h0M480 541h0M484 541h0M487 542h0M490 541h0M491 540h0M494 539h0M498 540h0M502 540h0M506 542h0M508 541h0M510 542h0M514 540h0M517 540h0M524 540h0M544 540h0M577 542h0M606 540h0M623 540h0M641 539h0M643 542h0M655 540h0M793 540h0M794 541h0M800 541h0M802 541h0M804 542h0M809 541h0M810 539h0M814 540h0M816 541h0M819 540h0M854 540h0M264 544h0M270 544h0M274 542h0M275 544h0M278 544h0M344 544h0M468 543h0M472 545h0M476 543h0M481 543h0M483 544h0M487 545h0M489 542h0M493 545h0M496 545h0M499 544h0M501 545h0M503 543h0M507 543h0M512 544h0M513 544h0M516 542h0M521 543h0M521 545h0M524 544h0M542 545h0M556 544h0M583 542h0M609 544h0M617 543h0M620 542h0M639 545h0M643 544h0M645 545h0M651 543h0M728 543h0M795 543h0M797 542h0M802 542h0M804 544h0M808 545h0M809 542h0M813 544h0M816 542h0M819 543h0M822 544h0M863 543h0M267 546h0M276 545h0M279 548h0M470 545h0M477 546h0M481 546h0M484 547h0M486 548h0M488 548h0M492 546h0M494 546h0M498 546h0M502 547h0M507 545h0M510 547h0M513 545h0M518 547h0M520 545h0M522 546h0M550 546h0M581 546h0M601 545h0M617 548h0M639 547h0M642 545h0M794 547h0M795 547h0M803 546h0M803 547h0M807 547h0M810 548h0M812 546h0M817 548h0M819 546h0M823 547h0M276 548h0M279 549h0M315 549h0M470 549h0M473 549h0M478 550h0M482 551h0M484 550h0M486 549h0M489 548h0M493 549h0M494 548h0M498 551h0M502 549h0M505 549h0M507 550h0M509 550h0M514 550h0M523 550h0M526 550h0M538 548h0M583 548h0M588 550h0M795 549h0M807 550h0M810 549h0M812 550h0M817 550h0M818 550h0M824 549h0M277 554h0M280 552h0M317 554h0M322 553h0M325 554h0M473 551h0M475 552h0M478 553h0M481 554h0M484 551h0M487 553h0M491 553h0M494 552h0M495 552h0M499 552h0M502 554h0M504 553h0M506 554h0M511 554h0M514 552h0M521 553h0M533 552h0M540 551h0M544 552h0M548 552h0M574 552h0M622 554h0M637 554h0M730 551h0M732 553h0M812 554h0M815 553h0M818 552h0M820 551h0M853 554h0M859 552h0M861 553h0M863 554h0M277 556h0M282 557h0M307 556h0M308 556h0M318 555h0M324 556h0M330 557h0M335 557h0M338 556h0M340 554h0M477 554h0M484 555h0M486 556h0M492 557h0M497 555h0M498 555h0M501 556h0M505 555h0M509 555h0M510 556h0M516 556h0M519 555h0M525 554h0M536 554h0M609 555h0M625 557h0M635 557h0M647 557h0M793 556h0M796 555h0M811 555h0M815 554h0M816 554h0M290 557h0M294 558h0M301 557h0M310 560h0M313 558h0M319 560h0M325 557h0M329 558h0M331 559h0M335 559h0M335 558h0M342 560h0M479 557h0M482 558h0M484 559h0M487 558h0M490 559h0M494 558h0M500 557h0M501 558h0M505 560h0M507 559h0M509 558h0M513 559h0M516 558h0M519 559h0M523 559h0M525 559h0M541 560h0M546 557h0M617 558h0M796 558h0M798 559h0M814 558h0M300 561h0M303 563h0M311 562h0M319 562h0M331 560h0M336 560h0M338 562h0M344 562h0M481 562h0M482 562h0M485 562h0M489 563h0M492 562h0M496 561h0M499 561h0M502 561h0M508 562h0M510 561h0M514 563h0M518 562h0M523 562h0M525 560h0M529 561h0M531 563h0M536 561h0M537 562h0M540 561h0M544 561h0M549 562h0M617 561h0M634 562h0M649 562h0M865 561h0M307 566h0M310 565h0M318 565h0M320 565h0M335 565h0M338 564h0M346 565h0M348 566h0M493 565h0M495 565h0M499 565h0M503 564h0M505 564h0M508 565h0M512 565h0M512 565h0M515 565h0M523 566h0M526 564h0M528 566h0M545 563h0M647 566h0M652 566h0M797 566h0M868 565h0M300 568h0M311 568h0M320 569h0M494 568h0M499 566h0M501 567h0M506 567h0M506 567h0M511 568h0M515 566h0M534 567h0M541 566h0M549 568h0M590 569h0M614 568h0M617 567h0M637 567h0M639 567h0M643 566h0M653 567h0M799 566h0M801 568h0M300 569h0M305 570h0M321 570h0M352 569h0M494 569h0M497 569h0M501 569h0M541 570h0M610 571h0M618 571h0M630 570h0M786 572h0M789 570h0M806 570h0M808 571h0M311 572h0M314 573h0M320 574h0M558 572h0M599 574h0M602 574h0M616 574h0M618 572h0M792 574h0M804 574h0M301 576h0M317 578h0M374 576h0M555 576h0M566 578h0M596 576h0M597 577h0M606 575h0M617 575h0M620 577h0M625 576h0M794 577h0M799 576h0M800 578h0M804 577h0M807 576h0M293 580h0M297 581h0M299 580h0M302 580h0M332 581h0M352 580h0M550 578h0M572 578h0M597 578h0M599 579h0M605 580h0M610 580h0M611 580h0M620 579h0M621 578h0M795 581h0M797 581h0M802 581h0M808 579h0M826 579h0M292 584h0M300 583h0M307 581h0M315 584h0M321 584h0M348 583h0M595 582h0M598 584h0M599 584h0M605 582h0M620 582h0M626 582h0M298 586h0M301 587h0M308 585h0M314 585h0M315 586h0M321 586h0M372 584h0M377 586h0M588 587h0M596 585h0M599 586h0M602 585h0M617 585h0M622 587h0M824 584h0M889 585h0M292 588h0M304 588h0M305 589h0M314 588h0M334 590h0M547 590h0M600 590h0M604 589h0M614 587h0M615 588h0M623 590h0M809 590h0M896 590h0M290 593h0M294 591h0M298 592h0M312 591h0M315 590h0M348 593h0M592 591h0M594 592h0M598 591h0M600 590h0M602 591h0M611 591h0M617 590h0M617 591h0M625 591h0M812 593h0M940 591h0M290 594h0M306 594h0M322 594h0M378 595h0M567 595h0M578 595h0M585 595h0M602 594h0M603 595h0M607 594h0M615 596h0M812 595h0M901 594h0M903 595h0M915 594h0M297 596h0M306 597h0M321 598h0M338 597h0M585 598h0M591 598h0M600 596h0M623 596h0M627 597h0M811 597h0M906 596h0M915 598h0M924 596h0M294 602h0M308 600h0M312 599h0M391 599h0M556 601h0M571 602h0M603 599h0M823 601h0M908 601h0M931 600h0M292 605h0M309 603h0M320 602h0M554 604h0M561 602h0M818 602h0M823 603h0M827 604h0M828 602h0M830 603h0M833 604h0M295 606h0M313 605h0M314 607h0M372 606h0M376 607h0M414 607h0M585 606h0M587 605h0M597 607h0M829 607h0M835 607h0M840 606h0M852 608h0M913 605h0M297 609h0M300 609h0M312 609h0M316 610h0M319 610h0M396 610h0M557 610h0M580 608h0M588 611h0M843 609h0M304 613h0M308 611h0M396 614h0M558 612h0M580 613h0M598 613h0M611 612h0M302 615h0M306 617h0M315 617h0M377 617h0M391 614h0M568 617h0M580 616h0M308 618h0M565 618h0M593 617h0M602 618h0M316 622h0M320 621h0M320 622h0M392 623h0M557 622h0M653 622h0M305 623h0M310 626h0M319 624h0M562 626h0M580 623h0M589 625h0M596 624h0M613 624h0M321 628h0M342 628h0M348 627h0M353 629h0M581 628h0M613 627h0M616 627h0M620 628h0M315 629h0M561 632h0M570 630h0M595 631h0M601 631h0M615 632h0M317 633h0M320 634h0M575 633h0M595 634h0M609 634h0M616 634h0M642 633h0M337 637h0M358 637h0M378 636h0M396 637h0M569 636h0M597 638h0M615 638h0M617 638h0M330 638h0M339 639h0M349 640h0M562 640h0M582 638h0M591 639h0M609 640h0M643 638h0M324 644h0M350 642h0M357 642h0M577 642h0M598 643h0M356 645h0M394 645h0M576 644h0M586 646h0M593 645h0M600 645h0M607 644h0M875 645h0M356 650h0M606 648h0M614 649h0M327 651h0M330 650h0M339 653h0M357 650h0M367 652h0M560 651h0M566 653h0M586 652h0M608 652h0M883 651h0M332 654h0M589 656h0M609 655h0M318 658h0M327 658h0M334 658h0M380 656h0M571 659h0M601 658h0M564 661h0M602 661h0M607 661h0M608 661h0M911 660h0M342 664h0M584 664h0M589 664h0M592 664h0M595 663h0M596 665h0M599 665h0M322 665h0M360 667h0M570 666h0M574 666h0M576 668h0M582 668h0M593 667h0M599 667h0M603 668h0M608 667h0M349 671h0M350 671h0M364 668h0M365 670h0M577 669h0M590 671h0M596 668h0M601 669h0M604 669h0M324 673h0M347 671h0M350 673h0M355 672h0M357 671h0M361 671h0M364 674h0M565 673h0M583 671h0M593 673h0M595 672h0M596 673h0M603 672h0M316 675h0M320 677h0M346 677h0M349 674h0M352 676h0M354 675h0M362 675h0M570 675h0M587 677h0M592 675h0M594 676h0M349 679h0M352 678h0M353 678h0M361 678h0M364 677h0M365 680h0M567 680h0M590 678h0M321 683h0M347 681h0M349 680h0M356 681h0M357 682h0M364 681h0M570 683h0M584 682h0M861 682h0M318 685h0M320 685h0M349 684h0M351 685h0M357 685h0M361 685h0M346 687h0M348 688h0M350 688h0M358 687h0M1002 687h0M1006 693h0M355 696h0M1016 701h0M1008 701h0M1013 701h0M318 706h0M1013 704h0M310 713h0M315 714h0M319 714h0M331 715h0M314 716h0M314 718h0M999 720h0M19 620h0M32 623h0M37 637h0M22 643h0M65 644h0M95 633h0M149 655h0M70 522h0M76 527h0M468 486h0M450 540h0M500 627h0M672 596h0M671 642h0M678 641h0M332 487h0M720 553h0M777 545h0M875 507h0M894 562h0M924 540h0M961 563h0M998 563h0M1003 579h0M986 584h0M812 612h0M788 617h0M930 589h0M1020 607h0M988 668h0M989 631h0M984 645h0M965 600h0M970 606h0M950 598h0M284 517h0M290 518h0M290 517h0M295 519h0M294 519h0M298 522h0M298 521h0M302 523h0M302 523h0M307 525h0M285 523h0M280 520h0M311 526h0M317 528h0M318 527h0M322 530h0M321 530h0M318 531h0M317 532h0M312 532h0M312 531h0M308 531h0M315 530h0M319 529h0M298 530h0M300 531h0M328 530h0M331 531h0M339 531h0M341 533h0M341 533h0M342 538h0M343 537h0M343 540h0M343 540h0M345 542h0M344 542h0M344 544h0M344 544h0M345 546h0M345 546h0M343 550h0M342 550h0M346 551h0M346 551h0M344 554h0M299 511h0M303 513h0M302 515h0M305 516h0M307 518h0M814 602h0M818 604h0M821 604h0M822 603h0M827 603h0M828 604h0M833 605h0M833 605h0M837 606h0M844 608h0M846 607h0M850 608h0M850 607h0M853 608h0M857 608h0M857 607h0M860 607h0M864 607h0M866 610h0M872 608h0M1008 695h0M1010 698h0M1012 701h0M1012 700h0M1010 705h0M1010 704h0M1010 708h0M1009 711h0M1004 712h0M1004 716h0M1002 719h0M1003 718h0M1000 723h0M998 726h0M996 729h0M909 477h0M905 477h0M901 478h0M898 479h0M897 479h0M894 480h0M891 481h0M891 480h0M888 483h0M884 483h0M884 484h0M886 481h0M890 480h0M894 478h0M896 478h0M901 476h0M903 475h0M907 474h0M906 473h0M910 470h0M912 467h0M913 466h0M913 464h0M914 460h0M913 458h0M914 454h0M915 449h0M874 470h0M876 473h0M878 477h0M877 476h0M873 478h0M858 541h0M856 537h0M856 537h0M858 542h0M859 545h0M861 548h0M863 551h0M866 555h0M865 554h0M867 557h0M868 561h0M870 563h0M870 563h0M867 561h0M866 558h0M864 556h0M861 552h0M859 510h0M856 515h0M855 517h0M290 417h0M350 401h0M357 408h0M348 417h0M338 418h0M320 425h0M326 428h0M331 431h0M332 434h0M337 440h0M335 442h0M331 444h0M320 444h0M310 455h0M306 458h0M305 462h0M303 465h0M301 470h0M300 472h0M301 476h0M298 479h0M293 482h0M285 492h0M286 496h0M289 507h0M289 508h0M288 506h0M285 500h0M274 493h0M267 492h0M262 496h0M256 494h0M239 514h0M240 523h0M241 525h0M247 532h0M264 524h0M264 524h0M268 524h0M270 522h0M267 530h0M269 540h0M272 540h0M276 541h0M280 541h0M279 549h0M279 552h0M283 558h0M292 559h0M296 560h0M296 560h0M298 560h0M288 560h0M285 558h0M283 558h0M281 556h0M257 540h0M251 536h0M236 534h0M235 533h0M221 525h0M221 523h0M219 517h0M214 511h0M211 507h0M202 497h0M201 495h0M196 500h0M197 502h0M208 515h0M204 512h0M196 503h0M191 493h0M188 486h0M182 479h0M179 478h0M175 472h0M174 469h0M172 467h0M168 459h0M168 456h0M168 449h0M169 444h0M165 430h0M172 428h0M164 419h0M151 402h0M302 559h0M305 556h0M307 554h0M308 554h0M315 550h0M313 550h0M313 551h0M312 554h0M316 558h0M318 555h0M318 553h0M327 555h0M333 556h0M338 556h0M342 558h0M347 562h0M350 564h0M353 566h0M366 571h0M370 574h0M374 579h0M374 579h0M378 586h0M386 588h0M388 589h0M393 592h0M406 595h0M415 600h0M416 606h0M410 614h0M406 620h0M401 640h0M395 648h0M392 648h0M386 650h0M383 652h0M377 664h0M376 666h0M373 671h0M366 680h0M354 684h0M352 689h0M353 690h0M354 696h0M353 697h0M347 700h0M338 706h0M332 719h0M310 716h0M312 703h0M312 695h0M316 685h0M320 656h0M321 639h0M319 634h0M301 617h0M291 596h0M293 593h0M290 589h0M292 586h0M294 582h0M294 581h0M298 577h0M300 574h0M300 572h0M300 559h0M502 473h0M498 471h0M493 470h0M492 466h0M493 456h0M491 451h0M497 449h0M502 450h0M514 436h0M506 429h0M506 429h0M509 428h0M512 425h0M523 418h0M532 410h0M964 408h0M959 411h0M958 405h0M913 407h0M905 433h0M900 440h0M894 445h0M879 455h0M874 462h0M874 466h0M878 471h0M879 476h0M876 477h0M874 476h0M870 468h0M865 460h0M860 465h0M856 457h0M847 468h0M854 472h0M856 472h0M854 483h0M857 490h0M857 490h0M857 499h0M855 502h0M840 515h0M838 517h0M831 519h0M828 523h0M818 520h0M813 526h0M813 531h0M818 538h0M820 541h0M821 550h0M818 551h0M815 554h0M814 556h0M813 558h0M812 553h0M808 549h0M795 549h0M798 565h0M803 568h0M806 574h0M807 578h0M803 574h0M802 570h0M796 561h0M795 560h0M796 556h0M794 543h0M793 539h0M784 536h0M784 537h0M781 525h0M778 521h0M777 520h0M773 516h0M755 526h0M742 537h0M740 544h0M739 552h0M736 556h0M733 557h0M732 552h0M728 544h0M724 532h0M723 528h0M723 522h0M718 520h0M716 521h0M712 519h0M705 509h0M690 508h0M679 507h0M677 504h0M670 503h0M663 500h0M660 495h0M650 499h0M653 504h0M654 506h0M656 511h0M662 511h0M659 510h0M659 512h0M660 514h0M669 515h0M672 513h0M676 508h0M673 509h0M674 512h0M678 517h0M681 518h0M680 522h0M677 526h0M675 529h0M671 532h0M670 533h0M653 541h0M638 537h0M634 529h0M626 514h0M621 506h0M614 501h0M616 490h0M617 486h0M619 477h0M619 476h0M616 471h0M613 472h0M610 472h0M604 470h0M594 467h0M593 465h0M592 462h0M598 454h0M598 448h0M602 441h0M607 439h0M609 437h0M609 445h0M612 446h0M619 442h0M618 442h0M624 448h0M630 454h0M621 454h0M616 452h0M613 452h0M599 455h0M592 459h0M579 459h0M581 466h0M578 471h0M581 472h0M578 467h0M577 464h0M573 459h0M571 452h0M559 440h0M552 448h0M554 451h0M561 457h0M568 458h0M562 460h0M562 464h0M563 467h0M563 462h0M559 457h0M551 452h0M546 445h0M543 443h0M516 457h0M514 465h0M512 468h0M510 470h0M501 472h0M499 473h0M500 478h0M506 480h0M525 474h0M531 474h0M535 474h0M545 471h0M544 475h0M544 479h0M544 481h0M547 486h0M552 487h0M561 492h0M562 493h0M568 495h0M581 489h0M583 490h0M588 493h0M602 493h0M605 492h0M609 505h0M612 509h0M614 513h0M618 520h0M618 523h0M619 528h0M624 536h0M625 539h0M631 544h0M638 553h0M642 555h0M658 552h0M657 554h0M654 562h0M649 569h0M645 574h0M638 580h0M626 594h0M625 602h0M626 609h0M628 616h0M617 635h0M612 642h0M614 649h0M598 674h0M593 680h0M590 681h0M573 685h0M574 686h0M569 679h0M565 668h0M562 662h0M561 660h0M552 628h0M556 616h0M555 606h0M551 596h0M544 584h0M546 578h0M544 571h0M537 569h0M532 567h0M506 567h0M501 568h0M491 566h0M489 565h0M481 560h0M481 559h0M476 553h0M470 548h0M470 543h0M472 537h0M472 526h0M473 517h0M474 514h0M481 504h0M490 496h0M492 492h0M498 483h0M502 477h0M653 634h0M647 654h0M644 655h0M641 651h0M641 645h0M642 636h0M654 621h0M656 619h0M920 422h0M918 436h0M918 437h0M918 429h0M918 423h0M918 411h0M915 442h0M921 446h0M919 450h0M920 451h0M912 453h0M916 448h0M917 444h0M913 457h0M914 460h0M912 468h0M908 477h0M904 478h0M899 480h0M900 481h0M894 479h0M888 480h0M889 480h0M893 479h0M902 472h0M902 470h0M908 471h0M912 466h0M884 484h0M885 488h0M884 490h0M885 490h0M884 487h0M884 486h0M884 484h0M892 483h0M893 481h0M891 483h0M891 483h0M856 515h0M826 529h0M864 544h0M857 535h0M870 562h0M870 564h0M865 562h0M864 563h0M867 560h0M871 558h0M867 550h0M866 552h0M866 553h0M864 554h0M862 551h0M846 558h0M846 566h0M848 570h0M846 572h0M843 588h0M830 591h0M828 590h0M826 584h0M825 582h0M831 577h0M832 577h0M790 571h0M797 578h0M812 591h0M812 594h0M809 595h0M800 585h0M795 578h0M816 602h0M820 603h0M822 603h0M828 604h0M834 605h0M837 607h0M825 604h0M817 602h0M816 602h0M842 609h0M843 607h0M856 610h0M861 595h0M855 594h0M854 594h0M854 591h0M854 589h0M856 584h0M859 583h0M863 582h0M876 581h0M875 583h0M877 580h0M882 591h0M893 589h0M899 593h0M914 593h0M927 600h0M930 601h0M933 608h0M932 608h0M924 603h0M908 605h0M898 594h0M896 593h0M892 591h0M890 590h0M892 592h0M893 588h0M888 586h0M888 586h0M943 597h0M937 598h0M743 563h0M743 559h0M917 617h0M919 623h0M928 639h0M935 646h0M940 650h0M937 692h0M920 699h0M917 698h0M915 698h0M908 689h0M900 686h0M842 685h0M843 684h0M862 635h0M893 619h0M901 620h0M908 634h0M914 632h0M917 619h0M930 717h0M927 715h0M1010 698h0M1015 700h0M1020 698h0M1013 704h0M1010 710h0M1008 703h0M1005 686h0M1004 711h0M1004 712h0M1003 716h0M1000 716h0M517 408h0M519 409h0M518 414h0M516 416h0M505 418h0M500 419h0M502 422h0M504 414h0M505 408h0M505 408h0M510 405h0M498 402h0M498 400h0M357 415h0M365 429h0M361 431h0M352 429h0M353 428h0M340 422h0M340 423h0M166 428h0M158 418h0M147 410h0M48 403h0M46 406h0M22 408h0M288 518h0M290 519h0M295 522h0M298 523h0M303 525h0M304 524h0M300 524h0M300 524h0M292 519h0M287 519h0M282 519h0M283 519h0M314 528h0M320 530h0M322 529h0M315 530h0M309 530h0M314 529h0M300 534h0M327 532h0M299 511h0M78 526h0M79 527h0M79 526h0M65 521h0M542 463h0M541 458h0M540 459h0M541 453h0M543 453h0M543 452h0M588 477h0M584 477h0M611 476h0M610 478h0M612 479h0M668 550h0M668 547h0M979 643h0M988 646h0M1017 634h0M1018 633h0M984 627h0M988 627h0M987 628h0M961 607h0M962 605h0M953 599h0M942 594h0M946 594h0M942 589h0M625 601h0M628 599h0M629 600h0M450 538h0M449 537h0M476 500h0M471 498h0M471 502h0M258 585h0M260 584h0M261 583h0M443 466h0M342 555h0M344 556h0M341 531h0M340 530h0M342 539h0M344 537h0M343 543h0M345 540h0M343 544h0M346 543h0M346 545h0M301 514h0M304 513h0M308 522h0M929 440h0M932 442h0M932 442h0M953 419h0M955 422h0M954 418h0M946 433h0M967 403h0M966 404h0M957 415h0M956 410h0" stroke="#e41c1c" stroke-width="3.9" stroke-linecap="round" fill="none"/>
<path d="M56 203.5L67.3 244 56 232.8z" fill="#0000e0"/><path d="M56 203.5L43.3 244.4 56 232.8 67.3 244" fill="none" stroke="#fff" stroke-width="0.9" stroke-dasharray="1.5 1"/>
<rect x="843" y="692" width="153" height="6" fill="none" stroke="#000" stroke-width="1"/><rect x="843.0" y="692.5" width="15.3" height="5" fill="#9c9cf0"/><rect x="858.3" y="692.5" width="15.3" height="5" fill="#000"/><rect x="873.6" y="692.5" width="15.3" height="5" fill="#9c9cf0"/><rect x="888.9" y="692.5" width="15.3" height="5" fill="#000"/><rect x="904.2" y="692.5" width="15.3" height="5" fill="#9c9cf0"/><rect x="919.5" y="692.5" width="15.3" height="5" fill="#000"/><rect x="934.8" y="692.5" width="15.3" height="5" fill="#9c9cf0"/><rect x="950.1" y="692.5" width="15.3" height="5" fill="#000"/><rect x="965.4" y="692.5" width="15.3" height="5" fill="#9c9cf0"/><rect x="980.7" y="692.5" width="15.3" height="5" fill="#000"/>
<text x="890" y="690" font-family="Liberation Sans" font-size="10.6" fill="#1c1c80">6,400,000 m</text>
</svg>
<div class="a" style="left:1051px;top:169px;width:305px;height:553px;border:1px solid #cdd0d8;background:#efefef"></div>
<div class="t" style="left:1056px;top:175px;font-size:12px;color:#444">File manager</div>
<div class="a" style="left:1129px;top:179px;width:185px;height:5px;background-image:radial-gradient(circle at 1px 1px,#c6c6c6 0.8px,transparent 1px);background-size:3px 3px"></div>
<svg class="a" style="left:1321px;top:174px" width="10" height="13"><path d="M2 1h6M3 1v6M7 1v6M1 7h8M5 7v5" stroke="#111" stroke-width="1.3" fill="none"/></svg>
<svg class="a" style="left:1338px;top:176px" width="11" height="11"><path d="M1 1L10 10M10 1L1 10" stroke="#111" stroke-width="1.4"/></svg>
<!-- tree -->
<div class="a" style="left:1059px;top:194px;width:9px;height:9px;border:1px solid #999;background:#fff"></div>
<div class="a" style="left:1061px;top:198px;width:5px;height:1px;background:#333"></div>
<div class="a" style="left:1069px;top:199px;width:6px;border-top:1px dotted #888"></div>
<div class="a" style="left:1082px;top:207px;height:104px;border-left:1px dotted #888"></div>
<div class="t" style="left:1095px;top:193px;color:#111;font-size:11px;letter-spacing:-0.15px">Files</div>
<div class="a" style="left:1083px;top:215px;width:9px;border-top:1px dotted #888"></div>
<div class="t" style="left:1114px;top:209px;color:#111;font-size:11px;letter-spacing:-0.15px">Projects</div>
<div class="a" style="left:1077px;top:226px;width:9px;height:9px;border:1px solid #999;background:#fff"></div>
<div class="a" style="left:1079px;top:230px;width:5px;height:1px;background:#333"></div>
<div class="a" style="left:1081px;top:228px;width:1px;height:5px;background:#333"></div>
<div class="a" style="left:1086px;top:231px;width:6px;border-top:1px dotted #888"></div>
<div class="t" style="left:1114px;top:225px;color:#111;font-size:11px;letter-spacing:-0.15px">Maps</div>
<div class="a" style="left:1083px;top:247px;width:9px;border-top:1px dotted #888"></div>
<div class="t" style="left:1114px;top:241px;color:#111;font-size:11px;letter-spacing:-0.15px">Waypoints, tracks, routes</div>
<div class="a" style="left:1083px;top:263px;width:9px;border-top:1px dotted #888"></div>
<div class="t" style="left:1114px;top:257px;color:#111;font-size:11px;letter-spacing:-0.15px">Toponyms</div>
<div class="a" style="left:1083px;top:279px;width:9px;border-top:1px dotted #888"></div>
<div class="t" style="left:1114px;top:273px;color:#111;font-size:11px;letter-spacing:-0.15px">Photos</div>
<div class="a" style="left:1083px;top:295px;width:9px;border-top:1px dotted #888"></div>
<div class="t" style="left:1114px;top:289px;color:#111;font-size:11px;letter-spacing:-0.15px">List indexed files</div>
<div class="a" style="left:1083px;top:311px;width:9px;border-top:1px dotted #888"></div>
<div class="t" style="left:1114px;top:305px;color:#111;font-size:11px;letter-spacing:-0.15px">OkMap database</div>
<!-- selected item -->
<div class="t" style="left:1061px;top:655px;color:#3f9ad6;font-size:11px;letter-spacing:-0.15px">Selected item</div>
<svg class="a" style="left:1060px;top:670px" width="16" height="16"><path d="M3 13L11 2l2 2L5 14z" fill="#f0e070" stroke="#333" stroke-width="1"/><path d="M11 2l2 2" stroke="#864" stroke-width="2"/><path d="M7 14h1M10 14h1M13 14h1" stroke="#333"/></svg>
<div class="t" style="left:1082px;top:673px;color:#111;font-size:11px;letter-spacing:-0.15px">File has been modified</div>
<div class="t" style="left:1061px;top:690px;color:#111;font-size:11px;letter-spacing:-0.15px">Context menu available (mouse right click)</div>

</div>
<div class="a" style="left:0;top:0;width:1362px;height:747px;border:1px solid #1b2b36;pointer-events:none"></div>
</body></html>
